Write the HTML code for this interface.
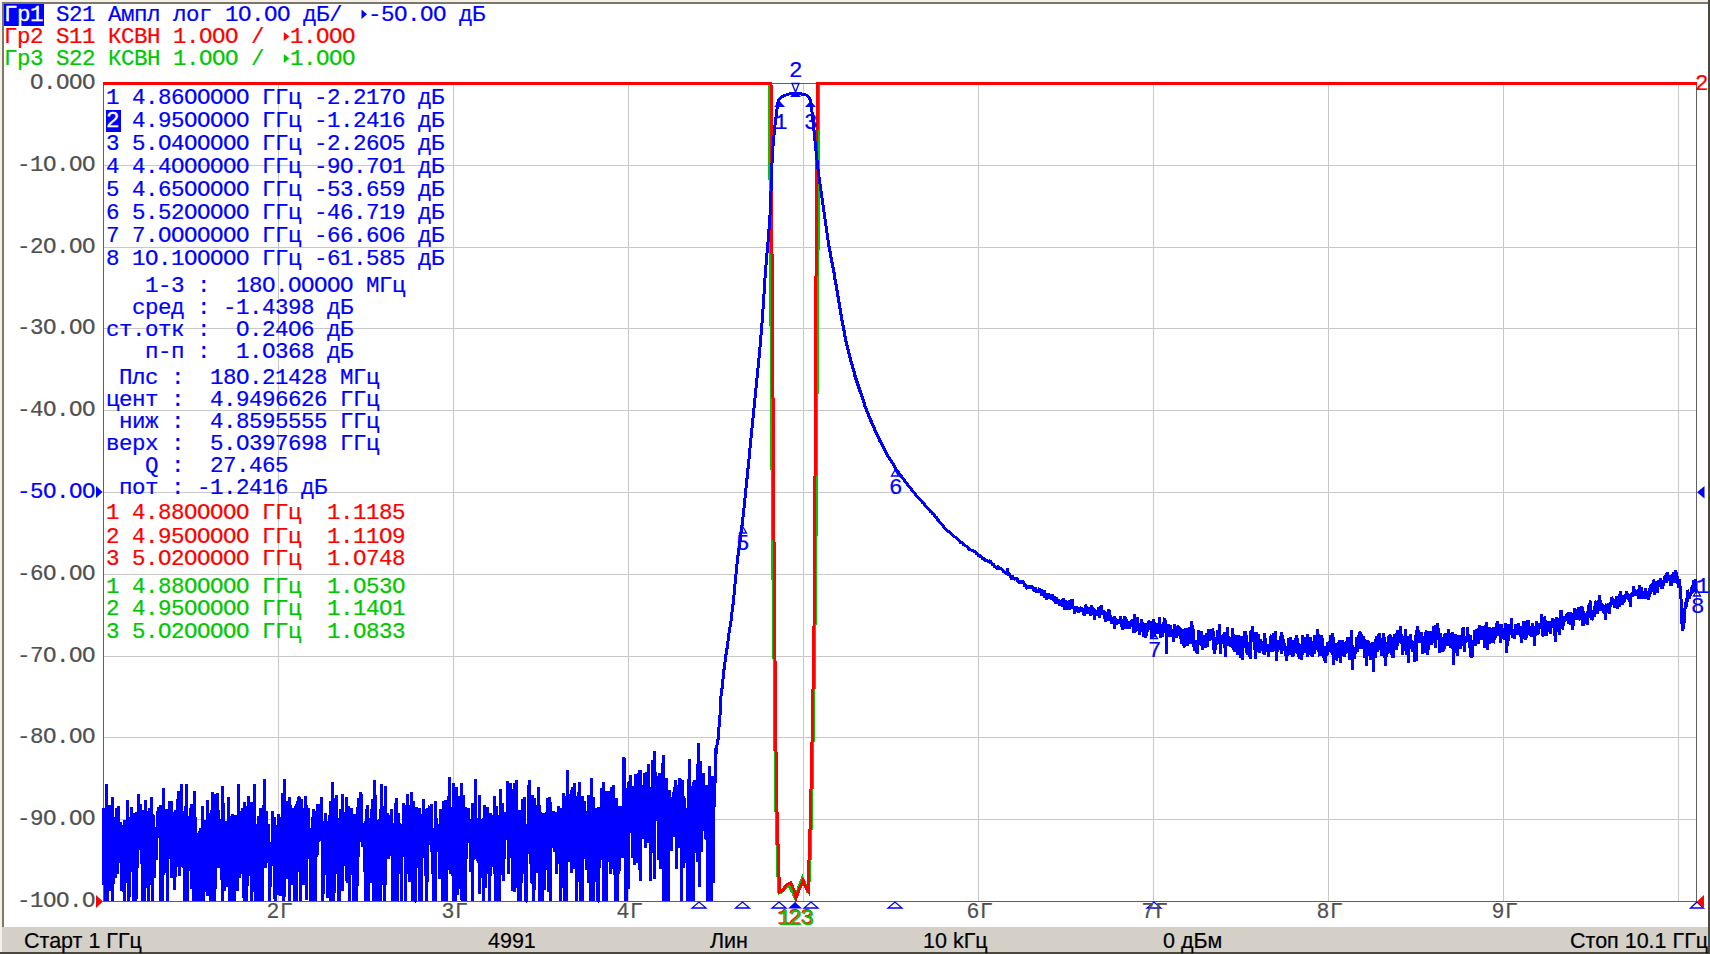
<!DOCTYPE html>
<html><head><meta charset="utf-8">
<style>
html,body{margin:0;padding:0;}
body{width:1710px;height:954px;position:relative;overflow:hidden;background:#fff;}
.m{position:absolute;font-family:"Liberation Mono",monospace;font-size:22.5px;letter-spacing:-0.5px;line-height:22px;white-space:pre;-webkit-text-stroke:0.22px currentColor;}
.hl{-webkit-text-stroke:0.3px #fff;}
.s{position:absolute;font-family:"Liberation Sans",sans-serif;font-size:21.5px;line-height:22px;white-space:pre;color:#000;-webkit-text-stroke:0.2px currentColor;}
.b{color:#0000ff}.r{color:#ff0000}.g{color:#00c800}.k{color:#505050}
.hl{display:inline-block;height:22px;background:#0000ff;color:#fff;}
svg{position:absolute;left:0;top:0;}
</style></head><body>
<svg width="1710" height="954" viewBox="0 0 1710 954">
 <g stroke="#c8c8c8" stroke-width="1" shape-rendering="crispEdges">
<line x1="278.5" y1="83.0" x2="278.5" y2="901.0"/>
<line x1="453.5" y1="83.0" x2="453.5" y2="901.0"/>
<line x1="628.5" y1="83.0" x2="628.5" y2="901.0"/>
<line x1="803.5" y1="83.0" x2="803.5" y2="901.0"/>
<line x1="978.5" y1="83.0" x2="978.5" y2="901.0"/>
<line x1="1153.5" y1="83.0" x2="1153.5" y2="901.0"/>
<line x1="1328.5" y1="83.0" x2="1328.5" y2="901.0"/>
<line x1="1503.5" y1="83.0" x2="1503.5" y2="901.0"/>
<line x1="1678.5" y1="83.0" x2="1678.5" y2="901.0"/>
<line x1="103.0" y1="165.5" x2="1697.0" y2="165.5"/>
<line x1="103.0" y1="247.5" x2="1697.0" y2="247.5"/>
<line x1="103.0" y1="328.5" x2="1697.0" y2="328.5"/>
<line x1="103.0" y1="410.5" x2="1697.0" y2="410.5"/>
<line x1="103.0" y1="492.5" x2="1697.0" y2="492.5"/>
<line x1="103.0" y1="574.5" x2="1697.0" y2="574.5"/>
<line x1="103.0" y1="656.5" x2="1697.0" y2="656.5"/>
<line x1="103.0" y1="737.5" x2="1697.0" y2="737.5"/>
<line x1="103.0" y1="819.5" x2="1697.0" y2="819.5"/>
 </g>
 <g stroke="#606060" stroke-width="1" fill="none" shape-rendering="crispEdges">
  <rect x="103.5" y="83.5" width="1593" height="818"/>
 </g>
 <defs><clipPath id="pc"><rect x="100" y="80" width="1597.5" height="824"/></clipPath></defs>
 <g fill="none" stroke-width="3" stroke-linejoin="bevel" clip-path="url(#pc)" shape-rendering="crispEdges">
  <polyline stroke="#00c800" stroke-linejoin="miter" points="103,83 769.5,83 770,180 772.5,540 774,659 775,751 776,812 777.5,860 778,877 779,893 782,892 785,888 789,886 793,893 795.5,899 798.5,888 802.5,878 805.5,885 808,893 809.5,877 810,860 811.4,818 812.4,771 813.7,709 815,627 816,540 818.5,180 819,83 1697,83"/>
  <polyline stroke="#ff0000" stroke-linejoin="miter" points="103,83 771,83 771.5,180 774,540 775,659 776,751 777,812 778.5,860 779,877 779.5,892 783.2,890 786,885 790.6,882.8 794,890 796,898 799,890 803,880.6 806,888 808.8,892 809,860 810.4,818 811.4,771 812.7,709 814,627 814.7,540 816.5,180 817.5,83 1697,83"/>
  <polyline stroke="#0000ff" points="103.50,884.5 103.50,807.6 103.50,865.5 103.50,844.5 104.50,838.1 104.50,861.0 104.50,882.6 105.50,821.2 105.50,827.6 105.50,901.0 106.50,784.4 106.50,814.2 106.50,861.6 107.50,901.0 107.50,851.6 107.50,837.6 108.50,818.1 108.50,878.7 108.50,822.8 109.50,804.7 109.50,806.4 109.50,845.9 110.50,815.6 110.50,891.3 110.50,841.0 111.50,825.6 111.50,881.7 111.50,838.4 112.50,797.5 112.50,901.0 112.50,901.0 113.50,817.3 113.50,868.5 113.50,877.1 113.50,884.1 114.50,823.6 114.50,819.0 114.50,858.2 115.50,877.8 115.50,829.9 115.50,828.6 116.50,840.1 116.50,807.5 116.50,838.8 117.50,837.8 117.50,873.6 117.50,832.6 118.50,805.8 118.50,834.2 118.50,834.0 119.50,826.0 119.50,829.4 119.50,823.8 120.50,823.7 120.50,821.9 120.50,862.9 121.50,828.9 121.50,890.6 121.50,829.7 122.50,878.9 122.50,838.0 122.50,825.1 123.50,849.8 123.50,833.4 123.50,891.9 123.50,865.0 124.50,820.4 124.50,901.0 124.50,821.2 125.50,883.3 125.50,866.7 125.50,873.2 126.50,835.4 126.50,823.8 126.50,872.2 127.50,841.8 127.50,799.7 127.50,846.5 128.50,863.6 128.50,901.0 128.50,843.2 129.50,859.7 129.50,897.3 129.50,817.5 130.50,855.2 130.50,835.5 130.50,872.1 131.50,806.8 131.50,819.0 131.50,813.9 132.50,839.4 132.50,825.2 132.50,815.9 133.50,813.0 133.50,828.7 133.50,901.0 133.50,847.9 134.50,861.3 134.50,868.7 134.50,901.0 135.50,844.0 135.50,901.0 135.50,840.9 136.50,812.1 136.50,845.0 136.50,899.2 137.50,839.8 137.50,818.2 137.50,831.1 138.50,850.3 138.50,794.7 138.50,793.6 139.50,838.9 139.50,817.6 139.50,826.9 140.50,818.3 140.50,803.5 140.50,817.4 141.50,833.6 141.50,858.0 141.50,863.5 142.50,836.4 142.50,810.0 142.50,901.0 143.50,834.4 143.50,829.9 143.50,901.0 143.50,823.5 144.50,874.1 144.50,901.0 144.50,850.2 145.50,875.0 145.50,799.9 145.50,841.0 146.50,844.2 146.50,888.4 146.50,829.3 147.50,857.0 147.50,810.8 147.50,817.0 148.50,862.2 148.50,826.5 148.50,901.0 149.50,858.7 149.50,808.0 149.50,818.1 150.50,831.7 150.50,836.6 150.50,884.3 151.50,882.3 151.50,830.6 151.50,796.6 152.50,901.0 152.50,821.7 152.50,822.3 153.50,814.6 153.50,865.4 153.50,853.7 153.50,834.6 154.50,870.9 154.50,877.8 154.50,865.9 155.50,838.0 155.50,827.3 155.50,836.4 156.50,833.9 156.50,859.1 156.50,860.3 157.50,810.8 157.50,837.4 157.50,838.4 158.50,814.9 158.50,808.2 158.50,807.4 159.50,826.6 159.50,837.3 159.50,829.2 160.50,831.6 160.50,804.7 160.50,901.0 161.50,821.5 161.50,836.5 161.50,805.3 162.50,901.0 162.50,827.2 162.50,818.9 163.50,875.4 163.50,788.1 163.50,840.7 163.50,841.1 164.50,872.6 164.50,816.2 164.50,830.6 165.50,855.9 165.50,830.6 165.50,820.4 166.50,808.7 166.50,830.8 166.50,868.7 167.50,854.7 167.50,901.0 167.50,901.0 168.50,819.3 168.50,825.3 168.50,839.3 169.50,847.3 169.50,800.6 169.50,829.3 170.50,815.5 170.50,826.8 170.50,858.6 171.50,801.2 171.50,878.1 171.50,876.7 172.50,850.3 172.50,860.6 172.50,854.7 173.50,856.2 173.50,813.8 173.50,834.4 173.50,827.8 174.50,890.1 174.50,864.7 174.50,811.6 175.50,876.9 175.50,809.5 175.50,871.0 176.50,829.0 176.50,864.6 176.50,831.2 177.50,866.5 177.50,844.4 177.50,798.6 178.50,848.5 178.50,790.6 178.50,851.3 179.50,876.0 179.50,833.9 179.50,849.6 180.50,796.8 180.50,816.5 180.50,809.5 181.50,821.6 181.50,783.6 181.50,818.0 182.50,823.8 182.50,864.1 182.50,866.8 183.50,831.5 183.50,813.5 183.50,810.9 183.50,868.0 184.50,823.8 184.50,831.3 184.50,901.0 185.50,824.3 185.50,901.0 185.50,829.7 186.50,783.6 186.50,870.6 186.50,835.1 187.50,900.6 187.50,861.5 187.50,818.9 188.50,871.4 188.50,836.7 188.50,847.8 189.50,848.6 189.50,831.3 189.50,824.9 190.50,808.4 190.50,817.2 190.50,855.0 191.50,804.3 191.50,808.0 191.50,889.1 192.50,820.9 192.50,817.3 192.50,814.2 193.50,823.5 193.50,880.1 193.50,844.8 193.50,901.0 194.50,841.0 194.50,790.7 194.50,820.5 195.50,817.1 195.50,853.2 195.50,870.5 196.50,901.0 196.50,832.8 196.50,863.1 197.50,901.0 197.50,901.0 197.50,891.9 198.50,880.7 198.50,853.1 198.50,839.0 199.50,840.0 199.50,883.5 199.50,831.3 200.50,901.0 200.50,827.7 200.50,872.8 201.50,830.2 201.50,830.7 201.50,858.2 202.50,843.1 202.50,854.7 202.50,805.6 203.50,901.0 203.50,885.3 203.50,894.2 203.50,848.6 204.50,858.9 204.50,849.7 204.50,819.7 205.50,891.6 205.50,864.6 205.50,843.2 206.50,876.9 206.50,827.4 206.50,828.3 207.50,860.0 207.50,896.4 207.50,800.2 208.50,825.2 208.50,826.2 208.50,834.0 209.50,835.8 209.50,817.2 209.50,836.1 210.50,857.2 210.50,901.0 210.50,834.2 211.50,862.1 211.50,866.7 211.50,809.8 212.50,821.6 212.50,791.9 212.50,853.7 213.50,861.1 213.50,901.0 213.50,805.1 213.50,822.4 214.50,826.0 214.50,793.9 214.50,901.0 215.50,878.4 215.50,861.1 215.50,846.4 216.50,827.3 216.50,813.0 216.50,826.6 217.50,801.9 217.50,864.0 217.50,793.5 218.50,863.5 218.50,809.7 218.50,867.8 219.50,828.0 219.50,834.4 219.50,824.1 220.50,819.0 220.50,842.9 220.50,837.9 221.50,830.3 221.50,880.4 221.50,860.7 222.50,891.4 222.50,901.0 222.50,786.5 223.50,819.2 223.50,865.3 223.50,859.9 223.50,814.0 224.50,851.9 224.50,890.8 224.50,870.7 225.50,871.8 225.50,870.7 225.50,820.6 226.50,834.0 226.50,886.7 226.50,854.1 227.50,874.7 227.50,877.1 227.50,887.3 228.50,797.0 228.50,846.1 228.50,822.8 229.50,816.4 229.50,901.0 229.50,823.7 230.50,823.6 230.50,830.6 230.50,901.0 231.50,829.3 231.50,843.4 231.50,821.3 232.50,901.0 232.50,813.6 232.50,852.0 233.50,865.1 233.50,867.5 233.50,858.3 233.50,827.0 234.50,816.9 234.50,901.0 234.50,836.2 235.50,873.5 235.50,820.5 235.50,815.4 236.50,862.3 236.50,851.0 236.50,868.3 237.50,826.9 237.50,890.9 237.50,874.2 238.50,859.1 238.50,808.5 238.50,784.1 239.50,835.1 239.50,877.9 239.50,833.9 240.50,865.4 240.50,825.4 240.50,873.8 241.50,848.3 241.50,836.0 241.50,824.1 242.50,838.2 242.50,807.6 242.50,832.8 243.50,897.9 243.50,815.2 243.50,845.6 243.50,858.6 244.50,802.3 244.50,901.0 244.50,834.0 245.50,860.1 245.50,805.7 245.50,848.1 246.50,830.4 246.50,883.4 246.50,901.0 247.50,872.3 247.50,815.5 247.50,811.0 248.50,808.3 248.50,795.5 248.50,875.8 249.50,826.7 249.50,832.5 249.50,826.3 250.50,811.3 250.50,833.1 250.50,863.6 251.50,838.9 251.50,801.6 251.50,901.0 252.50,833.8 252.50,869.3 252.50,811.1 253.50,892.2 253.50,847.3 253.50,839.8 253.50,833.0 254.50,784.4 254.50,801.2 254.50,870.9 255.50,901.0 255.50,876.5 255.50,899.8 256.50,887.0 256.50,831.1 256.50,823.7 257.50,901.0 257.50,825.9 257.50,844.7 258.50,820.0 258.50,848.8 258.50,815.7 259.50,823.1 259.50,875.8 259.50,901.0 260.50,830.9 260.50,819.4 260.50,807.7 261.50,901.0 261.50,838.5 261.50,863.8 262.50,867.9 262.50,829.7 262.50,901.0 263.50,806.2 263.50,805.0 263.50,836.3 263.50,864.3 264.50,778.8 264.50,788.1 264.50,839.2 265.50,867.5 265.50,850.1 265.50,829.4 266.50,810.6 266.50,814.2 266.50,825.9 267.50,844.1 267.50,831.8 267.50,846.2 268.50,834.0 268.50,839.1 268.50,824.0 269.50,900.2 269.50,847.4 269.50,901.0 270.50,874.4 270.50,841.5 270.50,871.8 271.50,858.4 271.50,845.5 271.50,844.3 272.50,855.3 272.50,811.2 272.50,831.1 273.50,828.4 273.50,830.4 273.50,858.5 273.50,865.9 274.50,817.0 274.50,847.7 274.50,896.4 275.50,901.0 275.50,830.7 275.50,860.9 276.50,837.9 276.50,854.4 276.50,849.6 277.50,841.5 277.50,878.4 277.50,836.2 278.50,813.8 278.50,820.2 278.50,895.3 279.50,881.7 279.50,881.4 279.50,844.1 280.50,816.7 280.50,828.4 280.50,895.8 281.50,834.3 281.50,817.7 281.50,851.0 282.50,793.5 282.50,857.9 282.50,809.7 283.50,901.0 283.50,879.4 283.50,846.7 283.50,822.9 284.50,778.7 284.50,897.0 284.50,823.1 285.50,829.3 285.50,850.1 285.50,864.2 286.50,853.6 286.50,846.0 286.50,879.2 287.50,800.8 287.50,873.6 287.50,850.2 288.50,858.3 288.50,849.8 288.50,833.5 289.50,861.6 289.50,901.0 289.50,797.5 290.50,812.2 290.50,845.5 290.50,815.5 291.50,862.0 291.50,830.6 291.50,884.6 292.50,874.9 292.50,865.3 292.50,808.2 293.50,830.5 293.50,823.5 293.50,832.2 293.50,827.5 294.50,901.0 294.50,818.7 294.50,832.0 295.50,867.0 295.50,862.7 295.50,808.7 296.50,804.4 296.50,901.0 296.50,892.1 297.50,800.8 297.50,828.4 297.50,838.1 298.50,835.1 298.50,848.4 298.50,796.7 299.50,798.4 299.50,872.1 299.50,842.1 300.50,901.0 300.50,807.4 300.50,901.0 301.50,815.0 301.50,798.7 301.50,847.0 302.50,837.3 302.50,808.1 302.50,827.5 303.50,881.8 303.50,876.2 303.50,871.5 303.50,884.8 304.50,836.3 304.50,853.9 304.50,835.0 305.50,820.3 305.50,796.4 305.50,831.1 306.50,900.2 306.50,805.1 306.50,840.2 307.50,810.1 307.50,851.6 307.50,829.2 308.50,840.8 308.50,837.0 308.50,807.7 309.50,858.7 309.50,832.3 309.50,831.1 310.50,849.5 310.50,901.0 310.50,828.2 311.50,901.0 311.50,887.9 311.50,852.0 312.50,901.0 312.50,816.9 312.50,817.6 313.50,822.7 313.50,848.7 313.50,809.0 313.50,845.3 314.50,811.1 314.50,901.0 314.50,868.9 315.50,855.9 315.50,836.2 315.50,901.0 316.50,817.9 316.50,814.0 316.50,818.5 317.50,853.9 317.50,803.7 317.50,854.9 318.50,815.8 318.50,838.1 318.50,836.7 319.50,841.4 319.50,836.8 319.50,811.3 320.50,804.1 320.50,804.3 320.50,815.8 321.50,821.1 321.50,825.9 321.50,797.0 322.50,851.3 322.50,901.0 322.50,834.8 323.50,893.5 323.50,844.2 323.50,838.1 323.50,871.4 324.50,855.9 324.50,820.5 324.50,844.0 325.50,834.2 325.50,813.0 325.50,857.2 326.50,875.4 326.50,837.5 326.50,826.5 327.50,898.4 327.50,821.4 327.50,846.9 328.50,850.3 328.50,865.7 328.50,842.4 329.50,814.6 329.50,824.2 329.50,817.9 330.50,848.6 330.50,800.6 330.50,901.0 331.50,836.6 331.50,901.0 331.50,834.4 332.50,781.8 332.50,837.8 332.50,871.0 333.50,798.0 333.50,857.0 333.50,824.8 333.50,901.0 334.50,886.4 334.50,832.9 334.50,809.3 335.50,847.0 335.50,821.2 335.50,836.5 336.50,812.9 336.50,794.7 336.50,873.5 337.50,845.5 337.50,826.9 337.50,857.4 338.50,864.1 338.50,847.6 338.50,901.0 339.50,858.2 339.50,901.0 339.50,817.7 340.50,819.1 340.50,820.6 340.50,809.2 341.50,882.5 341.50,839.6 341.50,831.4 342.50,823.9 342.50,891.1 342.50,794.0 343.50,866.2 343.50,829.7 343.50,819.3 343.50,811.6 344.50,859.1 344.50,854.2 344.50,827.4 345.50,822.6 345.50,815.4 345.50,837.5 346.50,859.4 346.50,881.4 346.50,797.0 347.50,882.7 347.50,820.1 347.50,829.4 348.50,818.7 348.50,814.4 348.50,805.7 349.50,837.5 349.50,826.7 349.50,901.0 350.50,834.5 350.50,866.6 350.50,840.7 351.50,808.1 351.50,833.1 351.50,811.4 352.50,842.3 352.50,826.6 352.50,849.6 353.50,901.0 353.50,859.9 353.50,844.5 353.50,832.0 354.50,835.4 354.50,839.7 354.50,814.5 355.50,821.6 355.50,849.0 355.50,816.2 356.50,901.0 356.50,845.0 356.50,840.4 357.50,806.6 357.50,853.7 357.50,885.9 358.50,831.5 358.50,798.0 358.50,842.4 359.50,838.6 359.50,842.2 359.50,834.2 360.50,806.5 360.50,791.9 360.50,824.9 361.50,838.7 361.50,794.3 361.50,833.1 362.50,833.8 362.50,847.4 362.50,845.9 363.50,829.9 363.50,844.9 363.50,826.0 363.50,833.2 364.50,822.9 364.50,848.1 364.50,841.9 365.50,901.0 365.50,833.7 365.50,833.0 366.50,809.4 366.50,871.8 366.50,901.0 367.50,819.2 367.50,901.0 367.50,805.4 368.50,837.9 368.50,875.2 368.50,901.0 369.50,826.4 369.50,850.6 369.50,860.8 370.50,822.8 370.50,858.3 370.50,826.6 371.50,809.5 371.50,882.8 371.50,847.3 372.50,824.7 372.50,798.6 372.50,814.7 373.50,850.7 373.50,803.0 373.50,901.0 373.50,840.7 374.50,826.9 374.50,872.8 374.50,779.6 375.50,808.9 375.50,901.0 375.50,854.7 376.50,875.0 376.50,827.1 376.50,820.0 377.50,848.9 377.50,841.9 377.50,823.1 378.50,837.3 378.50,899.0 378.50,901.0 379.50,830.0 379.50,819.3 379.50,861.2 380.50,901.0 380.50,878.2 380.50,828.8 381.50,789.5 381.50,784.4 381.50,828.7 382.50,885.4 382.50,846.9 382.50,825.6 383.50,825.8 383.50,833.3 383.50,805.9 383.50,866.3 384.50,901.0 384.50,865.5 384.50,875.3 385.50,786.1 385.50,841.8 385.50,884.5 386.50,821.8 386.50,813.2 386.50,834.3 387.50,831.2 387.50,812.8 387.50,824.1 388.50,859.4 388.50,822.4 388.50,814.9 389.50,827.9 389.50,816.2 389.50,822.6 390.50,843.5 390.50,840.5 390.50,821.9 391.50,854.5 391.50,810.0 391.50,808.6 392.50,901.0 392.50,837.9 392.50,861.3 393.50,857.3 393.50,832.3 393.50,841.3 393.50,823.0 394.50,828.4 394.50,827.3 394.50,862.4 395.50,847.5 395.50,803.3 395.50,901.0 396.50,797.6 396.50,854.8 396.50,809.5 397.50,901.0 397.50,849.9 397.50,816.8 398.50,832.2 398.50,813.1 398.50,865.6 399.50,854.7 399.50,858.0 399.50,824.3 400.50,825.3 400.50,839.7 400.50,844.6 401.50,901.0 401.50,833.6 401.50,868.1 402.50,837.5 402.50,840.5 402.50,854.1 403.50,855.1 403.50,802.9 403.50,856.6 403.50,826.4 404.50,805.3 404.50,819.2 404.50,835.1 405.50,813.1 405.50,884.5 405.50,901.0 406.50,849.1 406.50,843.1 406.50,838.8 407.50,794.0 407.50,798.3 407.50,836.8 408.50,829.9 408.50,866.7 408.50,828.5 409.50,881.6 409.50,804.6 409.50,853.4 410.50,823.2 410.50,880.4 410.50,804.8 411.50,822.0 411.50,792.3 411.50,834.0 412.50,891.2 412.50,862.5 412.50,901.0 413.50,800.7 413.50,857.0 413.50,861.4 413.50,901.0 414.50,829.7 414.50,824.7 414.50,901.0 415.50,901.0 415.50,882.2 415.50,901.0 416.50,807.3 416.50,815.4 416.50,848.4 417.50,821.8 417.50,820.7 417.50,821.5 418.50,823.8 418.50,816.0 418.50,833.7 419.50,901.0 419.50,901.0 419.50,807.6 420.50,822.3 420.50,901.0 420.50,831.7 421.50,865.7 421.50,854.4 421.50,901.0 422.50,818.5 422.50,838.4 422.50,817.5 423.50,811.5 423.50,807.0 423.50,799.1 423.50,829.1 424.50,830.7 424.50,857.5 424.50,823.8 425.50,843.7 425.50,876.0 425.50,808.9 426.50,819.7 426.50,901.0 426.50,899.6 427.50,843.0 427.50,881.7 427.50,808.3 428.50,831.4 428.50,822.7 428.50,814.6 429.50,805.6 429.50,844.7 429.50,821.4 430.50,829.6 430.50,817.5 430.50,822.9 431.50,803.6 431.50,823.3 431.50,851.6 432.50,832.5 432.50,874.2 432.50,828.1 433.50,901.0 433.50,855.9 433.50,892.1 433.50,837.7 434.50,852.4 434.50,835.2 434.50,855.4 435.50,833.4 435.50,901.0 435.50,800.6 436.50,842.8 436.50,823.7 436.50,818.3 437.50,840.2 437.50,825.1 437.50,843.5 438.50,850.4 438.50,842.6 438.50,824.3 439.50,878.7 439.50,866.2 439.50,862.7 440.50,854.5 440.50,809.4 440.50,836.0 441.50,845.4 441.50,831.9 441.50,811.6 442.50,860.7 442.50,812.4 442.50,901.0 443.50,865.4 443.50,802.3 443.50,800.5 443.50,830.6 444.50,849.2 444.50,816.6 444.50,848.6 445.50,800.5 445.50,901.0 445.50,817.7 446.50,863.4 446.50,813.1 446.50,901.0 447.50,842.2 447.50,848.6 447.50,838.1 448.50,823.4 448.50,815.7 448.50,815.7 449.50,777.1 449.50,845.5 449.50,808.6 450.50,856.4 450.50,840.2 450.50,873.6 451.50,807.3 451.50,828.4 451.50,831.2 452.50,837.3 452.50,813.6 452.50,850.4 453.50,901.0 453.50,782.8 453.50,838.0 453.50,854.6 454.50,867.9 454.50,815.8 454.50,832.3 455.50,901.0 455.50,861.6 455.50,833.1 456.50,867.4 456.50,787.2 456.50,839.4 457.50,839.0 457.50,836.0 457.50,895.3 458.50,882.8 458.50,845.3 458.50,834.3 459.50,875.5 459.50,796.1 459.50,823.6 460.50,805.1 460.50,807.7 460.50,840.5 461.50,783.2 461.50,831.0 461.50,897.8 462.50,901.0 462.50,833.7 462.50,814.4 463.50,832.1 463.50,795.2 463.50,843.0 463.50,821.2 464.50,817.4 464.50,868.2 464.50,826.9 465.50,825.6 465.50,901.0 465.50,806.9 466.50,811.9 466.50,858.9 466.50,817.5 467.50,810.0 467.50,833.0 467.50,817.1 468.50,816.7 468.50,807.6 468.50,832.1 469.50,823.3 469.50,829.5 469.50,832.4 470.50,854.1 470.50,844.5 470.50,871.6 471.50,839.8 471.50,818.7 471.50,820.3 472.50,901.0 472.50,836.9 472.50,803.2 473.50,848.8 473.50,817.1 473.50,824.8 473.50,858.8 474.50,857.4 474.50,817.5 474.50,833.2 475.50,828.0 475.50,779.2 475.50,821.5 476.50,831.3 476.50,817.7 476.50,853.7 477.50,839.1 477.50,824.1 477.50,861.1 478.50,834.6 478.50,839.3 478.50,831.5 479.50,893.6 479.50,794.8 479.50,835.9 480.50,821.8 480.50,868.5 480.50,877.8 481.50,833.3 481.50,844.0 481.50,819.5 482.50,864.6 482.50,866.7 482.50,826.5 483.50,818.4 483.50,901.0 483.50,834.5 483.50,828.1 484.50,860.2 484.50,804.8 484.50,808.7 485.50,809.4 485.50,888.0 485.50,814.5 486.50,858.0 486.50,823.0 486.50,824.4 487.50,807.0 487.50,839.6 487.50,844.8 488.50,867.7 488.50,873.8 488.50,821.2 489.50,864.3 489.50,819.3 489.50,901.0 490.50,852.8 490.50,813.0 490.50,815.2 491.50,867.3 491.50,839.2 491.50,834.4 492.50,819.5 492.50,858.7 492.50,847.8 493.50,837.5 493.50,819.0 493.50,814.6 493.50,852.1 494.50,795.6 494.50,825.0 494.50,860.9 495.50,886.8 495.50,850.8 495.50,901.0 496.50,830.3 496.50,822.1 496.50,806.4 497.50,823.4 497.50,892.4 497.50,843.5 498.50,819.1 498.50,901.0 498.50,862.0 499.50,820.7 499.50,833.3 499.50,901.0 500.50,851.2 500.50,834.0 500.50,788.7 501.50,848.9 501.50,865.0 501.50,829.1 502.50,827.1 502.50,821.9 502.50,802.7 503.50,836.1 503.50,880.9 503.50,833.5 503.50,834.0 504.50,813.1 504.50,815.9 504.50,859.0 505.50,817.4 505.50,812.3 505.50,840.2 506.50,813.5 506.50,830.7 506.50,830.4 507.50,838.7 507.50,816.6 507.50,780.6 508.50,829.3 508.50,873.5 508.50,841.6 509.50,853.6 509.50,827.2 509.50,838.4 510.50,782.9 510.50,817.9 510.50,793.3 511.50,857.9 511.50,840.9 511.50,789.0 512.50,891.2 512.50,831.2 512.50,886.8 513.50,800.4 513.50,882.2 513.50,844.1 513.50,839.8 514.50,891.6 514.50,783.3 514.50,839.5 515.50,798.1 515.50,857.6 515.50,884.1 516.50,829.7 516.50,830.3 516.50,780.3 517.50,870.1 517.50,887.5 517.50,858.2 518.50,827.8 518.50,822.1 518.50,901.0 519.50,846.0 519.50,822.5 519.50,810.5 520.50,854.5 520.50,831.7 520.50,901.0 521.50,867.4 521.50,825.2 521.50,835.0 522.50,840.6 522.50,799.1 522.50,844.1 523.50,871.8 523.50,830.1 523.50,830.1 523.50,873.6 524.50,812.6 524.50,797.1 524.50,854.5 525.50,864.2 525.50,837.1 525.50,901.0 526.50,901.0 526.50,859.3 526.50,854.5 527.50,829.4 527.50,830.0 527.50,840.1 528.50,808.1 528.50,785.0 528.50,854.1 529.50,811.7 529.50,828.7 529.50,779.8 530.50,864.4 530.50,846.0 530.50,832.3 531.50,883.2 531.50,841.4 531.50,818.9 532.50,883.9 532.50,831.8 532.50,795.2 533.50,854.7 533.50,865.1 533.50,901.0 533.50,837.9 534.50,890.2 534.50,822.4 534.50,798.3 535.50,822.4 535.50,861.5 535.50,820.2 536.50,850.4 536.50,873.1 536.50,851.4 537.50,829.4 537.50,846.8 537.50,823.1 538.50,787.3 538.50,821.2 538.50,818.0 539.50,901.0 539.50,805.3 539.50,827.0 540.50,812.4 540.50,861.1 540.50,829.6 541.50,901.0 541.50,846.7 541.50,863.5 542.50,869.1 542.50,901.0 542.50,887.3 543.50,839.7 543.50,839.5 543.50,823.2 543.50,812.6 544.50,889.8 544.50,853.3 544.50,858.9 545.50,819.6 545.50,814.3 545.50,848.9 546.50,853.5 546.50,869.7 546.50,827.0 547.50,798.3 547.50,826.8 547.50,859.1 548.50,863.6 548.50,859.5 548.50,891.7 549.50,796.9 549.50,833.6 549.50,846.4 550.50,901.0 550.50,830.4 550.50,802.5 551.50,829.3 551.50,810.9 551.50,833.7 552.50,847.8 552.50,826.2 552.50,819.5 553.50,811.2 553.50,830.9 553.50,843.7 553.50,847.9 554.50,828.5 554.50,851.9 554.50,846.4 555.50,812.7 555.50,811.7 555.50,813.5 556.50,850.2 556.50,874.1 556.50,818.6 557.50,822.2 557.50,837.6 557.50,820.1 558.50,805.9 558.50,831.5 558.50,815.9 559.50,858.2 559.50,832.1 559.50,853.2 560.50,874.3 560.50,815.1 560.50,901.0 561.50,826.8 561.50,807.6 561.50,815.9 562.50,877.9 562.50,819.5 562.50,887.6 563.50,855.2 563.50,793.2 563.50,821.3 563.50,798.8 564.50,901.0 564.50,896.2 564.50,850.6 565.50,796.5 565.50,804.5 565.50,801.2 566.50,829.8 566.50,827.9 566.50,901.0 567.50,770.1 567.50,822.9 567.50,785.8 568.50,830.8 568.50,794.3 568.50,861.9 569.50,841.9 569.50,816.8 569.50,844.2 570.50,838.6 570.50,830.0 570.50,843.1 571.50,790.3 571.50,799.6 571.50,872.5 572.50,786.7 572.50,825.7 572.50,825.4 573.50,830.0 573.50,805.2 573.50,808.8 573.50,842.3 574.50,823.3 574.50,869.2 574.50,783.4 575.50,853.5 575.50,854.7 575.50,848.8 576.50,821.3 576.50,807.8 576.50,901.0 577.50,823.8 577.50,835.7 577.50,795.8 578.50,819.2 578.50,882.3 578.50,791.6 579.50,816.8 579.50,781.6 579.50,844.9 580.50,840.9 580.50,829.9 580.50,901.0 581.50,836.5 581.50,796.4 581.50,808.7 582.50,901.0 582.50,795.7 582.50,816.2 583.50,806.0 583.50,823.2 583.50,819.9 583.50,822.9 584.50,823.0 584.50,859.3 584.50,801.1 585.50,819.3 585.50,815.6 585.50,816.5 586.50,834.2 586.50,825.7 586.50,869.7 587.50,818.3 587.50,818.0 587.50,832.0 588.50,882.8 588.50,794.6 588.50,829.6 589.50,824.6 589.50,834.4 589.50,844.2 590.50,901.0 590.50,861.9 590.50,843.8 591.50,778.5 591.50,798.0 591.50,779.9 592.50,845.0 592.50,888.7 592.50,870.5 593.50,901.0 593.50,800.1 593.50,797.0 593.50,821.7 594.50,815.8 594.50,816.0 594.50,827.6 595.50,808.0 595.50,858.5 595.50,838.8 596.50,828.7 596.50,882.2 596.50,858.3 597.50,814.5 597.50,816.5 597.50,901.0 598.50,901.0 598.50,901.0 598.50,807.1 599.50,825.9 599.50,811.1 599.50,868.2 600.50,831.1 600.50,860.3 600.50,841.5 601.50,798.2 601.50,788.1 601.50,823.4 602.50,838.9 602.50,806.9 602.50,814.0 603.50,781.7 603.50,810.2 603.50,901.0 603.50,822.8 604.50,834.8 604.50,901.0 604.50,821.1 605.50,822.8 605.50,835.8 605.50,790.9 606.50,901.0 606.50,815.2 606.50,820.6 607.50,797.2 607.50,861.9 607.50,797.4 608.50,831.8 608.50,791.3 608.50,792.7 609.50,813.1 609.50,839.2 609.50,817.9 610.50,816.3 610.50,873.8 610.50,834.8 611.50,847.6 611.50,793.8 611.50,786.6 612.50,848.6 612.50,841.7 612.50,868.9 613.50,818.3 613.50,806.2 613.50,784.6 613.50,867.7 614.50,803.6 614.50,828.8 614.50,848.4 615.50,901.0 615.50,849.9 615.50,814.3 616.50,824.2 616.50,798.1 616.50,841.9 617.50,887.9 617.50,901.0 617.50,816.7 618.50,874.4 618.50,849.6 618.50,812.5 619.50,870.9 619.50,805.7 619.50,816.8 620.50,844.0 620.50,825.5 620.50,841.1 621.50,837.6 621.50,835.2 621.50,824.0 622.50,827.1 622.50,849.6 622.50,857.6 623.50,756.7 623.50,842.3 623.50,807.5 623.50,775.9 624.50,780.5 624.50,828.6 624.50,758.2 625.50,901.0 625.50,813.5 625.50,847.3 626.50,788.4 626.50,808.6 626.50,901.0 627.50,831.6 627.50,823.9 627.50,798.7 628.50,782.5 628.50,877.9 628.50,889.2 629.50,781.1 629.50,833.0 629.50,787.1 630.50,799.9 630.50,774.9 630.50,782.3 631.50,812.1 631.50,807.9 631.50,795.3 632.50,785.9 632.50,825.0 632.50,857.7 633.50,800.1 633.50,803.6 633.50,807.7 633.50,838.6 634.50,789.0 634.50,865.3 634.50,819.7 635.50,773.8 635.50,842.7 635.50,793.1 636.50,792.3 636.50,792.9 636.50,863.4 637.50,780.0 637.50,799.1 637.50,791.4 638.50,795.5 638.50,800.9 638.50,775.3 639.50,770.5 639.50,870.1 639.50,830.3 640.50,807.9 640.50,881.4 640.50,769.9 641.50,830.2 641.50,789.8 641.50,797.4 642.50,809.6 642.50,838.7 642.50,814.9 643.50,800.1 643.50,784.8 643.50,809.1 643.50,816.1 644.50,810.7 644.50,773.4 644.50,795.7 645.50,826.3 645.50,847.8 645.50,816.6 646.50,835.0 646.50,817.0 646.50,772.2 647.50,786.8 647.50,797.0 647.50,793.2 648.50,764.1 648.50,843.3 648.50,792.3 649.50,809.1 649.50,799.0 649.50,800.5 650.50,813.2 650.50,790.1 650.50,880.9 651.50,795.7 651.50,787.1 651.50,836.6 652.50,837.4 652.50,760.1 652.50,834.4 653.50,815.4 653.50,829.9 653.50,824.0 653.50,826.1 654.50,878.9 654.50,751.3 654.50,828.2 655.50,793.7 655.50,804.5 655.50,772.5 656.50,786.9 656.50,777.3 656.50,776.5 657.50,783.7 657.50,801.4 657.50,782.1 658.50,860.0 658.50,782.6 658.50,786.8 659.50,795.5 659.50,850.4 659.50,772.9 660.50,826.4 660.50,788.4 660.50,869.4 661.50,808.3 661.50,825.4 661.50,830.2 662.50,826.1 662.50,763.2 662.50,803.0 663.50,794.7 663.50,755.3 663.50,854.2 663.50,901.0 664.50,815.4 664.50,824.8 664.50,816.8 665.50,901.0 665.50,857.9 665.50,843.4 666.50,822.4 666.50,786.6 666.50,778.4 667.50,815.4 667.50,794.1 667.50,792.7 668.50,901.0 668.50,797.3 668.50,901.0 669.50,790.1 669.50,810.2 669.50,801.5 670.50,796.7 670.50,799.1 670.50,828.2 671.50,851.4 671.50,804.5 671.50,822.8 672.50,821.5 672.50,805.9 672.50,828.1 673.50,792.5 673.50,793.6 673.50,835.0 673.50,794.3 674.50,837.3 674.50,786.5 674.50,788.8 675.50,802.7 675.50,782.9 675.50,780.0 676.50,792.7 676.50,869.4 676.50,799.6 677.50,798.1 677.50,784.8 677.50,838.3 678.50,787.0 678.50,794.8 678.50,793.6 679.50,847.7 679.50,834.0 679.50,777.7 680.50,784.4 680.50,805.5 680.50,778.7 681.50,901.0 681.50,817.7 681.50,901.0 682.50,780.4 682.50,807.7 682.50,797.5 683.50,868.3 683.50,822.4 683.50,796.2 683.50,811.7 684.50,829.6 684.50,843.3 684.50,798.2 685.50,816.2 685.50,815.1 685.50,813.4 686.50,826.5 686.50,814.9 686.50,825.3 687.50,901.0 687.50,853.0 687.50,843.0 688.50,802.3 688.50,809.0 688.50,799.5 689.50,758.9 689.50,786.6 689.50,778.2 690.50,793.8 690.50,807.3 690.50,901.0 691.50,870.8 691.50,854.6 691.50,888.3 692.50,843.9 692.50,861.0 692.50,838.3 693.50,901.0 693.50,817.9 693.50,783.6 693.50,783.2 694.50,780.6 694.50,784.1 694.50,797.1 695.50,821.7 695.50,793.0 695.50,812.1 696.50,810.3 696.50,794.0 696.50,842.8 697.50,862.3 697.50,795.8 697.50,764.0 698.50,778.4 698.50,742.6 698.50,854.1 699.50,826.5 699.50,886.8 699.50,834.3 700.50,761.5 700.50,767.6 700.50,840.0 701.50,814.7 701.50,832.9 701.50,852.0 702.50,811.8 702.50,814.9 702.50,800.8 703.50,797.1 703.50,787.6 703.50,772.8 703.50,805.8 704.50,810.5 704.50,802.7 704.50,793.1 705.50,807.7 705.50,838.9 705.50,821.8 706.50,786.7 706.50,840.4 706.50,785.1 707.50,853.7 707.50,789.5 707.50,901.0 708.50,810.6 708.50,901.0 708.50,811.3 709.50,766.1 709.50,818.8 709.50,829.5 710.50,794.6 710.50,778.6 710.50,795.5 711.50,808.2 711.50,780.5 711.50,901.0 712.50,831.3 712.50,847.9 712.50,776.4 713.50,883.4 713.50,849.8 713.50,797.5 713.50,793.9 714.00,807.3 714.32,800.1 714.65,786.4 714.97,788.0 715.29,751.1 715.61,748.6 715.94,754.9 716.26,750.7 716.58,746.7 716.90,747.7 717.23,739.4 717.55,739.9 717.87,742.3 718.19,736.9 718.52,734.4 718.84,729.7 719.16,724.9 719.48,717.1 719.81,715.8 720.13,714.5 720.45,701.3 720.77,702.4 721.10,693.3 721.42,692.6 721.74,688.6 722.06,688.6 722.39,683.8 722.71,681.9 723.03,678.6 723.35,674.9 723.68,673.9 724.00,669.2 724.32,670.3 724.65,667.2 724.97,662.3 725.29,659.9 725.61,657.1 725.94,654.3 726.26,653.7 726.58,651.1 726.90,649.4 727.23,647.1 727.55,644.9 727.87,642.1 728.19,640.3 728.52,637.4 728.84,634.1 729.16,632.2 729.48,629.4 729.81,628.8 730.13,626.5 730.45,623.6 730.77,622.4 731.10,620.0 731.42,616.3 731.74,614.5 732.06,611.1 732.39,609.0 732.71,606.7 733.03,604.4 733.35,600.0 733.68,597.8 734.00,595.1 734.32,592.2 734.65,588.6 734.97,584.8 735.29,580.7 735.61,578.3 735.94,574.5 736.26,571.2 736.58,569.5 736.90,565.6 737.23,561.8 737.55,560.1 737.87,556.4 738.19,554.2 738.52,552.3 738.84,548.8 739.16,547.1 739.48,544.2 739.81,542.2 740.13,540.0 740.45,537.1 740.77,534.5 741.10,532.2 741.42,530.3 741.74,527.4 742.06,525.2 742.39,522.4 742.71,519.2 743.03,516.9 743.35,513.2 743.68,510.9 744.00,507.8 744.32,504.4 744.65,501.4 744.97,498.3 745.29,495.3 745.61,491.9 745.94,488.9 746.26,485.8 746.58,482.7 746.90,479.6 747.23,476.3 747.55,473.3 747.87,470.0 748.19,466.6 748.52,463.4 748.84,460.3 749.16,457.3 749.48,453.8 749.81,450.5 750.13,447.3 750.45,444.0 750.77,440.7 751.10,437.6 751.42,434.3 751.74,431.0 752.06,427.6 752.39,424.3 752.71,421.1 753.03,417.8 753.35,414.5 753.68,411.3 754.00,407.9 754.32,404.7 754.65,401.5 754.97,398.3 755.29,395.0 755.61,391.9 755.94,388.7 756.26,385.5 756.58,382.3 756.90,379.1 757.23,376.0 757.55,372.7 757.87,369.4 758.19,366.1 758.52,362.8 758.84,359.4 759.16,356.0 759.48,352.6 759.81,349.0 760.13,345.4 760.45,341.8 760.77,338.1 761.10,334.3 761.42,330.4 761.74,326.5 762.06,322.3 762.39,317.9 762.71,313.3 763.03,308.6 763.35,303.7 763.68,298.7 764.00,293.8 764.32,288.8 764.65,283.9 764.97,279.0 765.29,274.4 765.61,269.9 765.94,265.6 766.26,261.6 766.58,257.9 766.90,254.3 767.23,250.8 767.55,247.3 767.87,243.6 768.19,239.7 768.52,235.7 768.84,231.7 769.16,227.6 769.48,223.3 769.81,218.6 770.13,213.2 770.45,207.1 770.77,198.7 771.10,188.5 771.42,178.2 771.74,169.5 772.06,162.0 772.39,155.3 772.71,149.9 773.03,145.5 773.35,141.6 773.68,138.0 774.00,134.7 774.32,131.5 774.65,128.4 774.97,125.5 775.29,122.7 775.61,120.1 775.94,117.5 776.26,115.0 776.58,112.5 776.90,109.7 777.23,106.9 777.55,104.4 777.87,102.3 778.19,101.0 778.52,100.3 778.84,99.8 779.16,99.3 779.48,98.8 779.81,98.4 780.13,98.1 780.45,97.7 780.77,97.5 781.10,97.2 781.42,97.0 781.74,96.8 782.06,96.6 782.39,96.4 782.71,96.3 783.03,96.1 783.35,96.0 783.68,95.8 784.00,95.7 784.32,95.6 784.65,95.5 784.97,95.3 785.29,95.2 785.61,95.1 785.94,95.0 786.26,94.9 786.58,94.8 786.90,94.7 787.23,94.6 787.55,94.5 787.87,94.4 788.19,94.3 788.52,94.2 788.84,94.1 789.16,94.0 789.48,94.0 789.81,93.9 790.13,93.8 790.45,93.8 790.77,93.7 791.10,93.7 791.42,93.6 791.74,93.6 792.06,93.5 792.39,93.5 792.71,93.5 793.03,93.4 793.35,93.4 793.68,93.4 794.00,93.4 794.32,93.4 794.65,93.4 794.97,93.4 795.29,93.4 795.61,93.4 795.94,93.4 796.26,93.4 796.58,93.5 796.90,93.5 797.23,93.5 797.55,93.5 797.87,93.6 798.19,93.6 798.52,93.6 798.84,93.6 799.16,93.7 799.48,93.7 799.81,93.8 800.13,93.8 800.45,93.8 800.77,93.9 801.10,93.9 801.42,94.0 801.74,94.0 802.06,94.1 802.39,94.2 802.71,94.2 803.03,94.3 803.35,94.3 803.68,94.4 804.00,94.5 804.32,94.6 804.65,94.6 804.97,94.7 805.29,94.8 805.61,94.9 805.94,95.0 806.26,95.1 806.58,95.3 806.90,95.5 807.23,95.7 807.55,95.9 807.87,96.2 808.19,96.5 808.52,96.9 808.84,97.2 809.16,97.6 809.48,98.2 809.81,98.9 810.13,99.8 810.45,100.8 810.77,102.2 811.10,104.1 811.42,106.5 811.74,109.2 812.06,112.1 812.39,114.9 812.71,117.8 813.03,120.7 813.35,123.9 813.68,127.2 814.00,130.6 814.32,134.0 814.65,137.5 814.97,141.0 815.29,144.3 815.61,147.6 815.94,150.6 816.26,153.6 816.58,156.5 816.90,159.3 817.23,162.1 817.55,164.9 817.87,167.5 818.19,170.2 818.52,172.8 818.84,175.3 819.16,177.8 819.48,180.2 819.81,182.5 820.13,184.9 820.45,187.1 820.77,189.4 821.10,191.6 821.42,193.9 821.74,196.1 822.06,198.4 822.39,200.6 822.71,202.9 823.03,205.2 823.35,207.4 823.68,209.7 824.00,211.9 824.32,214.2 824.65,216.4 824.97,218.7 825.29,220.9 825.61,223.1 825.94,225.4 826.26,227.6 826.58,229.8 826.90,232.1 827.23,234.4 827.55,236.6 827.87,238.9 828.19,241.1 828.52,243.2 828.84,245.3 829.16,247.4 829.48,249.3 829.81,251.2 830.50,253.1 830.50,254.9 830.50,256.6 831.50,258.4 831.50,260.0 831.50,261.7 832.50,263.4 832.50,265.1 832.50,266.7 833.50,268.3 833.50,270.0 833.50,271.6 834.50,273.2 834.50,274.9 834.50,276.6 834.50,278.3 835.50,280.0 835.50,281.7 835.50,283.5 836.50,285.3 836.50,287.3 836.50,289.2 837.50,291.1 837.50,293.1 837.50,295.2 838.50,297.2 838.50,299.3 838.50,301.3 839.50,303.4 839.50,305.4 839.50,307.5 840.50,309.5 840.50,311.5 840.50,313.6 841.50,315.5 841.50,317.5 841.50,319.4 842.50,321.3 842.50,323.1 842.50,324.8 843.50,326.5 843.50,328.2 843.50,329.8 844.50,331.4 844.50,332.9 844.50,334.4 844.50,335.9 845.50,337.5 845.50,339.0 845.50,340.4 846.50,341.9 846.50,343.4 846.50,344.8 847.50,346.2 847.50,347.5 847.50,348.9 848.50,350.3 848.50,351.7 848.50,352.9 849.50,354.2 849.50,355.6 849.50,356.8 850.50,358.1 850.50,359.4 850.50,360.6 851.50,361.8 851.50,363.1 851.50,364.2 852.50,365.4 852.50,366.6 852.50,367.8 853.50,368.9 853.50,370.0 853.50,371.2 854.50,372.3 854.50,373.4 854.50,374.4 854.50,375.5 855.50,376.6 855.50,377.6 855.50,378.7 856.50,379.6 856.50,380.6 856.50,381.7 857.50,382.6 857.50,383.5 857.50,384.6 858.50,385.6 858.50,386.4 858.50,387.4 859.50,388.3 859.50,389.4 859.50,390.4 860.50,391.4 860.50,392.3 860.50,393.3 861.50,394.1 861.50,395.0 861.50,396.1 862.50,396.9 862.50,398.0 862.50,399.0 863.50,400.0 863.50,400.8 863.50,401.9 864.50,402.8 864.50,404.0 864.50,404.8 864.50,405.6 865.50,406.8 865.50,407.4 865.50,408.4 866.50,409.2 866.50,410.2 866.50,410.9 867.50,411.7 867.50,412.4 867.50,413.5 868.50,414.1 868.50,415.1 868.50,415.8 869.50,416.7 869.50,417.4 869.50,418.4 870.50,419.0 870.50,419.9 870.50,420.6 871.50,421.3 871.50,422.1 871.50,422.9 872.50,423.5 872.50,424.3 872.50,425.1 873.50,425.7 873.50,426.6 873.50,427.3 874.50,427.9 874.50,428.8 874.50,429.3 874.50,430.3 875.50,430.9 875.50,431.6 875.50,432.4 876.50,433.0 876.50,433.8 876.50,434.6 877.50,434.9 877.50,435.8 877.50,436.3 878.50,437.2 878.50,437.7 878.50,438.6 879.50,438.9 879.50,439.8 879.50,440.5 880.50,441.4 880.50,441.9 880.50,442.3 881.50,442.9 881.50,443.5 881.50,444.2 882.50,444.6 882.50,445.5 882.50,446.1 883.50,446.8 883.50,447.5 883.50,447.9 884.50,448.6 884.50,449.2 884.50,449.7 884.50,450.4 885.50,450.9 885.50,451.5 885.50,452.3 886.50,452.9 886.50,453.2 886.50,454.0 887.50,454.5 887.50,455.3 887.50,456.1 888.50,456.7 888.50,457.0 888.50,457.5 889.50,457.6 889.50,458.4 889.50,458.9 890.50,459.4 890.50,460.3 890.50,460.6 891.50,461.1 891.50,461.3 891.50,462.2 892.50,462.9 892.50,463.1 892.50,463.7 893.50,464.1 893.50,464.6 893.50,465.1 894.50,465.8 894.50,466.3 894.50,466.4 894.50,467.4 895.50,467.7 895.50,468.5 895.50,469.1 896.50,469.2 896.50,469.8 896.50,470.1 897.50,470.6 897.50,471.3 897.50,471.9 898.50,471.9 898.50,472.7 898.50,472.8 899.50,473.5 899.50,473.9 899.50,474.4 900.50,474.9 900.50,475.4 900.50,475.4 901.50,476.4 901.50,476.9 901.50,477.0 902.50,477.6 902.50,477.7 902.50,478.3 903.50,478.5 903.50,479.1 903.50,479.7 904.50,480.0 904.50,480.2 904.50,480.9 904.50,481.3 905.50,481.6 905.50,481.8 905.50,482.0 906.50,482.6 906.50,483.0 906.50,483.7 907.50,483.7 907.50,484.1 907.50,485.2 908.50,485.3 908.50,485.8 908.50,486.1 909.50,486.6 909.50,487.1 909.50,487.7 910.50,488.0 910.50,488.4 910.50,488.6 911.50,489.1 911.50,489.7 911.50,490.1 912.50,490.6 912.50,490.4 912.50,490.9 913.50,491.2 913.50,491.5 913.50,491.9 914.50,492.5 914.50,492.9 914.50,493.4 914.50,493.7 915.50,493.8 915.50,493.8 915.50,494.9 916.50,495.2 916.50,494.9 916.50,496.1 917.50,496.6 917.50,496.9 917.50,497.3 918.50,498.0 918.50,497.5 918.50,498.5 919.50,498.4 919.50,498.7 919.50,498.8 920.50,499.3 920.50,499.7 920.50,500.2 921.50,500.3 921.50,500.9 921.50,501.4 922.50,502.0 922.50,502.3 922.50,502.4 923.50,503.3 923.50,503.3 923.50,503.7 924.50,503.8 924.50,504.8 924.50,505.2 924.50,505.3 925.50,505.8 925.50,506.8 925.50,506.1 926.50,506.8 926.50,507.2 926.50,507.8 927.50,507.7 927.50,508.2 927.50,507.9 928.50,508.5 928.50,508.6 928.50,509.7 929.50,510.0 929.50,510.3 929.50,510.8 930.50,510.5 930.50,511.2 930.50,512.0 931.50,512.1 931.50,511.7 931.50,512.7 932.50,512.8 932.50,513.9 932.50,513.9 933.50,514.1 933.50,514.5 933.50,514.8 934.50,515.1 934.50,515.2 934.50,516.5 934.50,516.2 935.50,516.3 935.50,516.8 935.50,516.7 936.50,517.5 936.50,517.9 936.50,518.4 937.50,518.3 937.50,519.5 937.50,519.8 938.50,520.2 938.50,520.4 938.50,521.1 939.50,521.8 939.50,521.6 939.50,522.6 940.50,522.8 940.50,523.6 940.50,523.2 941.50,523.6 941.50,524.6 941.50,524.4 942.50,524.4 942.50,525.2 942.50,525.9 943.50,525.7 943.50,525.9 943.50,527.4 944.50,526.8 944.50,527.5 944.50,527.5 944.50,528.6 945.50,528.2 945.50,528.7 945.50,528.9 946.50,529.5 946.50,529.4 946.50,530.2 947.50,530.6 947.50,531.1 947.50,531.6 948.50,531.1 948.50,531.4 948.50,531.4 949.50,531.7 949.50,531.8 949.50,532.4 950.50,533.2 950.50,533.1 950.50,533.0 951.50,534.7 951.50,534.7 951.50,534.4 952.50,535.1 952.50,534.5 952.50,535.4 953.50,535.9 953.50,536.2 953.50,535.6 954.50,537.4 954.50,536.7 954.50,538.0 954.50,536.8 955.50,537.2 955.50,537.3 955.50,536.9 956.50,538.3 956.50,538.1 956.50,538.8 957.50,538.9 957.50,540.1 957.50,539.5 958.50,540.4 958.50,539.8 958.50,540.3 959.50,541.1 959.50,541.2 959.50,541.5 960.50,541.9 960.50,540.9 960.50,542.9 961.50,543.2 961.50,543.3 961.50,542.8 962.50,542.9 962.50,542.8 962.50,543.1 963.50,543.9 963.50,544.4 963.50,545.3 964.50,544.5 964.50,544.5 964.50,545.4 964.50,545.1 965.50,546.0 965.50,545.8 965.50,546.0 966.50,545.8 966.50,547.4 966.50,546.8 967.50,546.5 967.50,547.0 967.50,547.1 968.50,549.1 968.50,548.5 968.50,548.6 969.50,549.2 969.50,550.6 969.50,548.9 970.50,549.7 970.50,551.1 970.50,550.2 971.50,549.9 971.50,549.4 971.50,549.7 972.50,550.9 972.50,551.0 972.50,550.8 973.50,550.6 973.50,551.8 973.50,552.0 974.50,551.3 974.50,551.6 974.50,550.8 974.50,551.3 975.50,551.0 975.50,553.1 975.50,553.0 976.50,553.5 976.50,553.4 976.50,553.2 977.50,553.9 977.50,553.7 977.50,554.8 978.50,553.8 978.50,554.1 978.50,556.2 979.50,556.0 979.50,555.9 979.50,555.1 980.50,555.3 980.50,554.7 980.50,557.2 981.50,556.3 981.50,556.9 981.50,557.5 982.50,557.8 982.50,559.6 982.50,558.1 983.50,558.7 983.50,559.5 983.50,557.6 984.50,559.4 984.50,558.9 984.50,559.9 984.50,560.8 985.50,560.2 985.50,559.8 985.50,561.0 986.50,560.0 986.50,559.2 986.50,559.7 987.50,561.0 987.50,561.6 987.50,560.4 988.50,562.3 988.50,562.2 988.50,560.2 989.50,561.5 989.50,561.7 989.50,562.7 990.50,560.5 990.50,560.5 990.50,563.4 991.50,562.8 991.50,563.9 991.50,563.4 992.50,563.0 992.50,563.4 992.50,565.1 993.50,565.0 993.50,563.4 993.50,565.3 994.50,565.0 994.50,565.8 994.50,566.3 994.50,567.1 995.50,566.9 995.50,567.5 995.50,567.1 996.50,567.1 996.50,566.1 996.50,568.7 997.50,567.2 997.50,569.7 997.50,565.6 998.50,568.5 998.50,567.8 998.50,566.4 999.50,568.3 999.50,568.3 999.50,568.5 1000.50,568.6 1000.50,569.9 1000.50,568.0 1001.50,568.7 1001.50,569.8 1001.50,568.8 1002.50,570.2 1002.50,570.8 1002.50,570.7 1003.50,570.5 1003.50,572.9 1003.50,572.0 1004.50,571.4 1004.50,573.1 1004.50,571.7 1004.50,573.1 1005.50,571.8 1005.50,572.1 1005.50,571.7 1006.50,572.8 1006.50,574.1 1006.50,574.8 1007.50,568.4 1007.50,573.9 1007.50,573.6 1008.50,574.9 1008.50,572.1 1008.50,573.3 1009.50,573.5 1009.50,576.1 1009.50,574.1 1010.50,576.4 1010.50,574.5 1010.50,576.3 1011.50,579.2 1011.50,577.1 1011.50,578.4 1012.50,575.0 1012.50,579.5 1012.50,578.6 1013.50,578.8 1013.50,579.6 1013.50,579.5 1014.50,578.6 1014.50,578.0 1014.50,578.7 1014.50,578.3 1015.50,577.9 1015.50,578.9 1015.50,578.1 1016.50,578.0 1016.50,577.2 1016.50,578.1 1017.50,579.0 1017.50,579.1 1017.50,581.8 1018.50,579.8 1018.50,582.1 1018.50,582.1 1019.50,582.7 1019.50,581.6 1019.50,583.4 1020.50,581.9 1020.50,583.1 1020.50,583.1 1021.50,581.7 1021.50,583.1 1021.50,580.1 1022.50,582.4 1022.50,582.1 1022.50,580.1 1023.50,583.7 1023.50,581.4 1023.50,583.2 1024.50,584.1 1024.50,584.8 1024.50,587.1 1024.50,584.1 1025.50,585.9 1025.50,585.9 1025.50,585.6 1026.50,585.3 1026.50,586.1 1026.50,587.8 1027.50,588.4 1027.50,588.7 1027.50,587.5 1028.50,585.4 1028.50,588.5 1028.50,586.9 1029.50,585.4 1029.50,586.6 1029.50,586.4 1030.50,587.7 1030.50,586.1 1030.50,587.5 1031.50,587.9 1031.50,587.8 1031.50,586.8 1032.50,586.0 1032.50,589.3 1032.50,587.0 1033.50,589.5 1033.50,590.5 1033.50,589.0 1034.50,588.2 1034.50,588.5 1034.50,588.3 1034.50,592.3 1035.50,587.4 1035.50,588.5 1035.50,588.8 1036.50,592.3 1036.50,589.1 1036.50,590.7 1037.50,590.8 1037.50,590.2 1037.50,593.0 1038.50,588.9 1038.50,589.1 1038.50,589.3 1039.50,588.2 1039.50,593.0 1039.50,590.8 1040.50,591.2 1040.50,593.3 1040.50,590.8 1041.50,589.1 1041.50,595.7 1041.50,593.4 1042.50,594.4 1042.50,594.1 1042.50,593.8 1043.50,592.3 1043.50,594.1 1043.50,593.6 1044.50,590.3 1044.50,593.3 1044.50,594.0 1044.50,597.6 1045.50,594.5 1045.50,594.9 1045.50,595.7 1046.50,593.6 1046.50,599.8 1046.50,594.4 1047.50,598.5 1047.50,597.2 1047.50,598.6 1048.50,593.4 1048.50,594.8 1048.50,595.3 1049.50,594.6 1049.50,598.5 1049.50,596.2 1050.50,595.0 1050.50,597.0 1050.50,596.4 1051.50,599.6 1051.50,596.7 1051.50,597.5 1052.50,596.7 1052.50,594.3 1052.50,597.1 1053.50,598.6 1053.50,597.2 1053.50,600.7 1054.50,596.1 1054.50,599.8 1054.50,600.4 1054.50,599.9 1055.50,603.7 1055.50,601.3 1055.50,601.7 1056.50,596.9 1056.50,598.1 1056.50,597.3 1057.50,600.9 1057.50,600.8 1057.50,599.5 1058.50,603.5 1058.50,604.3 1058.50,599.3 1059.50,601.3 1059.50,601.1 1059.50,605.6 1060.50,603.1 1060.50,603.7 1060.50,604.8 1061.50,603.0 1061.50,605.7 1061.50,606.4 1062.50,599.6 1062.50,602.3 1062.50,605.3 1063.50,598.5 1063.50,601.8 1063.50,602.5 1064.50,609.6 1064.50,600.7 1064.50,603.7 1064.50,601.5 1065.50,600.5 1065.50,607.0 1065.50,600.2 1066.50,602.4 1066.50,604.1 1066.50,609.9 1067.50,600.6 1067.50,604.3 1067.50,603.7 1068.50,607.5 1068.50,603.2 1068.50,602.9 1069.50,600.8 1069.50,606.3 1069.50,609.5 1070.50,606.0 1070.50,606.7 1070.50,603.6 1071.50,604.1 1071.50,602.9 1071.50,600.4 1072.50,599.7 1072.50,603.8 1072.50,608.6 1073.50,606.0 1073.50,607.7 1073.50,608.3 1074.50,608.9 1074.50,608.6 1074.50,614.0 1074.50,607.1 1075.50,607.2 1075.50,607.5 1075.50,608.6 1076.50,606.1 1076.50,612.4 1076.50,608.5 1077.50,607.0 1077.50,609.9 1077.50,609.5 1078.50,607.4 1078.50,610.7 1078.50,612.4 1079.50,610.6 1079.50,607.5 1079.50,610.8 1080.50,607.6 1080.50,608.9 1080.50,608.2 1081.50,607.1 1081.50,608.1 1081.50,610.0 1082.50,609.8 1082.50,608.4 1082.50,612.4 1083.50,610.1 1083.50,614.6 1083.50,609.0 1084.50,612.5 1084.50,615.9 1084.50,613.6 1084.50,609.4 1085.50,609.6 1085.50,613.8 1085.50,604.7 1086.50,608.4 1086.50,608.2 1086.50,610.3 1087.50,612.0 1087.50,613.8 1087.50,609.0 1088.50,609.2 1088.50,610.0 1088.50,607.6 1089.50,609.2 1089.50,613.5 1089.50,612.5 1090.50,609.0 1090.50,616.3 1090.50,606.8 1091.50,614.0 1091.50,605.3 1091.50,610.1 1092.50,614.7 1092.50,608.1 1092.50,607.9 1093.50,609.3 1093.50,608.6 1093.50,609.5 1094.50,620.1 1094.50,609.4 1094.50,612.7 1094.50,611.8 1095.50,609.7 1095.50,611.6 1095.50,615.5 1096.50,610.3 1096.50,614.2 1096.50,613.1 1097.50,615.9 1097.50,613.5 1097.50,615.4 1098.50,607.3 1098.50,614.3 1098.50,608.6 1099.50,617.5 1099.50,612.4 1099.50,615.0 1100.50,611.9 1100.50,614.0 1100.50,608.1 1101.50,605.5 1101.50,614.6 1101.50,610.3 1102.50,614.9 1102.50,615.2 1102.50,612.9 1103.50,610.6 1103.50,611.9 1103.50,614.8 1104.50,611.3 1104.50,618.7 1104.50,618.2 1104.50,615.8 1105.50,622.2 1105.50,612.4 1105.50,617.2 1106.50,618.2 1106.50,615.8 1106.50,621.0 1107.50,616.7 1107.50,621.3 1107.50,615.4 1108.50,613.7 1108.50,609.0 1108.50,613.9 1109.50,610.4 1109.50,615.4 1109.50,621.3 1110.50,615.0 1110.50,618.3 1110.50,621.0 1111.50,616.6 1111.50,623.8 1111.50,621.6 1112.50,618.1 1112.50,617.8 1112.50,622.9 1113.50,619.7 1113.50,620.5 1113.50,618.7 1114.50,621.7 1114.50,629.0 1114.50,622.5 1114.50,615.9 1115.50,624.7 1115.50,622.3 1115.50,618.6 1116.50,622.2 1116.50,625.1 1116.50,620.8 1117.50,620.8 1117.50,622.2 1117.50,619.1 1118.50,623.2 1118.50,623.9 1118.50,622.5 1119.50,619.4 1119.50,618.9 1119.50,621.7 1120.50,616.3 1120.50,620.0 1120.50,623.0 1121.50,620.4 1121.50,620.3 1121.50,624.2 1122.50,629.8 1122.50,623.6 1122.50,621.3 1123.50,622.4 1123.50,622.9 1123.50,620.4 1124.50,619.6 1124.50,628.4 1124.50,616.3 1124.50,622.9 1125.50,616.9 1125.50,625.1 1125.50,628.9 1126.50,621.3 1126.50,623.3 1126.50,618.9 1127.50,622.9 1127.50,622.4 1127.50,623.6 1128.50,623.7 1128.50,620.7 1128.50,628.5 1129.50,622.7 1129.50,620.5 1129.50,628.8 1130.50,625.3 1130.50,627.3 1130.50,625.2 1131.50,622.6 1131.50,620.4 1131.50,619.6 1132.50,625.2 1132.50,619.8 1132.50,625.0 1133.50,627.1 1133.50,626.4 1133.50,632.6 1134.50,624.5 1134.50,632.9 1134.50,624.0 1134.50,613.8 1135.50,627.3 1135.50,631.5 1135.50,620.1 1136.50,625.7 1136.50,622.1 1136.50,623.1 1137.50,623.6 1137.50,616.5 1137.50,625.3 1138.50,626.3 1138.50,628.5 1138.50,630.2 1139.50,631.9 1139.50,634.5 1139.50,625.8 1140.50,630.1 1140.50,626.3 1140.50,626.7 1141.50,618.7 1141.50,628.4 1141.50,625.1 1142.50,631.6 1142.50,624.1 1142.50,631.0 1143.50,630.3 1143.50,637.1 1143.50,628.4 1144.50,622.7 1144.50,624.5 1144.50,635.6 1144.50,626.3 1145.50,633.7 1145.50,637.8 1145.50,634.8 1146.50,623.0 1146.50,630.5 1146.50,635.5 1147.50,628.3 1147.50,628.7 1147.50,631.4 1148.50,627.0 1148.50,629.7 1148.50,621.0 1149.50,621.6 1149.50,624.4 1149.50,622.9 1150.50,621.3 1150.50,627.1 1150.50,626.0 1151.50,630.2 1151.50,631.4 1151.50,638.8 1152.50,635.9 1152.50,634.3 1152.50,629.8 1153.50,618.7 1153.50,635.8 1153.50,632.2 1154.50,636.6 1154.50,630.3 1154.50,628.1 1154.50,622.6 1155.50,632.2 1155.50,623.4 1155.50,625.1 1156.50,628.6 1156.50,633.5 1156.50,631.9 1157.50,626.9 1157.50,623.0 1157.50,626.0 1158.50,629.3 1158.50,625.7 1158.50,633.4 1159.50,625.7 1159.50,616.6 1159.50,634.4 1160.50,626.0 1160.50,637.8 1160.50,631.7 1161.50,630.1 1161.50,626.5 1161.50,631.8 1162.50,624.4 1162.50,636.6 1162.50,629.8 1163.50,627.9 1163.50,626.6 1163.50,626.6 1164.50,617.6 1164.50,627.0 1164.50,621.8 1164.50,625.9 1165.50,620.3 1165.50,632.9 1165.50,629.6 1166.50,631.2 1166.50,653.7 1166.50,631.5 1167.50,627.4 1167.50,623.7 1167.50,634.5 1168.50,631.1 1168.50,623.7 1168.50,636.1 1169.50,634.9 1169.50,628.3 1169.50,628.0 1170.50,625.1 1170.50,626.2 1170.50,630.7 1171.50,637.3 1171.50,634.5 1171.50,631.7 1172.50,630.0 1172.50,632.0 1172.50,629.2 1173.50,638.4 1173.50,636.5 1173.50,642.1 1174.50,624.4 1174.50,634.3 1174.50,627.6 1174.50,625.4 1175.50,629.3 1175.50,631.8 1175.50,633.7 1176.50,632.4 1176.50,637.8 1176.50,633.5 1177.50,627.0 1177.50,628.9 1177.50,626.0 1178.50,627.3 1178.50,627.5 1178.50,630.6 1179.50,630.2 1179.50,626.7 1179.50,633.1 1180.50,638.9 1180.50,628.2 1180.50,633.2 1181.50,628.6 1181.50,638.1 1181.50,644.0 1182.50,636.9 1182.50,640.2 1182.50,642.8 1183.50,629.5 1183.50,636.3 1183.50,644.7 1184.50,647.3 1184.50,637.9 1184.50,633.3 1184.50,633.4 1185.50,628.2 1185.50,631.8 1185.50,630.9 1186.50,644.8 1186.50,627.6 1186.50,638.3 1187.50,631.1 1187.50,645.8 1187.50,642.3 1188.50,630.6 1188.50,643.2 1188.50,634.9 1189.50,637.5 1189.50,626.5 1189.50,634.0 1190.50,629.2 1190.50,635.6 1190.50,643.7 1191.50,621.5 1191.50,633.3 1191.50,627.4 1192.50,626.2 1192.50,634.9 1192.50,625.5 1193.50,633.2 1193.50,643.5 1193.50,642.7 1194.50,650.5 1194.50,642.2 1194.50,639.6 1194.50,645.1 1195.50,640.5 1195.50,644.6 1195.50,640.4 1196.50,646.4 1196.50,648.4 1196.50,652.0 1197.50,653.4 1197.50,649.5 1197.50,639.7 1198.50,642.0 1198.50,630.3 1198.50,631.6 1199.50,644.2 1199.50,634.6 1199.50,631.7 1200.50,642.8 1200.50,633.1 1200.50,644.7 1201.50,631.5 1201.50,637.7 1201.50,642.0 1202.50,650.2 1202.50,639.9 1202.50,643.1 1203.50,634.6 1203.50,642.8 1203.50,635.1 1204.50,640.9 1204.50,636.0 1204.50,636.2 1204.50,641.0 1205.50,639.6 1205.50,636.3 1205.50,648.0 1206.50,639.2 1206.50,640.9 1206.50,632.7 1207.50,641.7 1207.50,633.5 1207.50,647.3 1208.50,629.5 1208.50,632.4 1208.50,632.0 1209.50,629.1 1209.50,641.4 1209.50,636.4 1210.50,635.1 1210.50,636.7 1210.50,639.6 1211.50,632.4 1211.50,637.1 1211.50,638.3 1212.50,637.6 1212.50,630.8 1212.50,628.6 1213.50,633.2 1213.50,637.3 1213.50,650.1 1214.50,647.6 1214.50,651.9 1214.50,653.8 1214.50,640.0 1215.50,649.9 1215.50,636.9 1215.50,642.6 1216.50,641.9 1216.50,639.6 1216.50,644.5 1217.50,637.1 1217.50,629.5 1217.50,629.6 1218.50,632.3 1218.50,629.9 1218.50,633.1 1219.50,632.5 1219.50,624.4 1219.50,637.8 1220.50,650.2 1220.50,653.6 1220.50,646.3 1221.50,640.7 1221.50,635.9 1221.50,640.1 1222.50,639.9 1222.50,634.8 1222.50,644.1 1223.50,637.7 1223.50,633.8 1223.50,638.0 1224.50,641.4 1224.50,633.3 1224.50,632.4 1224.50,639.7 1225.50,656.6 1225.50,644.0 1225.50,642.3 1226.50,635.3 1226.50,638.1 1226.50,636.1 1227.50,628.2 1227.50,626.7 1227.50,633.7 1228.50,642.7 1228.50,646.3 1228.50,636.5 1229.50,645.8 1229.50,641.9 1229.50,643.4 1230.50,641.4 1230.50,638.3 1230.50,646.6 1231.50,640.4 1231.50,638.1 1231.50,637.2 1232.50,646.4 1232.50,628.4 1232.50,647.6 1233.50,634.1 1233.50,650.3 1233.50,635.0 1234.50,651.5 1234.50,635.4 1234.50,640.2 1234.50,636.7 1235.50,646.0 1235.50,640.1 1235.50,639.3 1236.50,641.5 1236.50,645.6 1236.50,635.3 1237.50,655.1 1237.50,653.2 1237.50,651.1 1238.50,634.9 1238.50,649.2 1238.50,649.6 1239.50,651.6 1239.50,650.5 1239.50,651.4 1240.50,653.0 1240.50,658.1 1240.50,644.5 1241.50,646.6 1241.50,636.3 1241.50,645.1 1242.50,649.5 1242.50,660.2 1242.50,650.3 1243.50,646.4 1243.50,638.2 1243.50,644.0 1244.50,639.3 1244.50,638.4 1244.50,631.3 1244.50,632.4 1245.50,638.2 1245.50,647.6 1245.50,630.7 1246.50,639.1 1246.50,646.1 1246.50,650.6 1247.50,654.2 1247.50,641.9 1247.50,644.6 1248.50,645.4 1248.50,641.8 1248.50,655.0 1249.50,649.9 1249.50,654.2 1249.50,653.6 1250.50,659.1 1250.50,644.9 1250.50,631.5 1251.50,638.5 1251.50,633.2 1251.50,634.7 1252.50,625.9 1252.50,628.6 1252.50,640.8 1253.50,640.0 1253.50,631.7 1253.50,638.0 1254.50,641.2 1254.50,637.6 1254.50,644.5 1254.50,649.6 1255.50,633.4 1255.50,648.8 1255.50,658.8 1256.50,645.0 1256.50,643.2 1256.50,632.4 1257.50,638.9 1257.50,643.1 1257.50,636.2 1258.50,645.1 1258.50,639.1 1258.50,634.5 1259.50,643.9 1259.50,652.9 1259.50,647.5 1260.50,647.2 1260.50,639.2 1260.50,646.0 1261.50,644.6 1261.50,651.1 1261.50,643.8 1262.50,650.3 1262.50,645.2 1262.50,648.1 1263.50,641.3 1263.50,647.1 1263.50,652.4 1264.50,654.5 1264.50,644.8 1264.50,639.0 1264.50,633.0 1265.50,643.2 1265.50,645.1 1265.50,652.2 1266.50,647.8 1266.50,644.2 1266.50,646.3 1267.50,647.4 1267.50,643.9 1267.50,644.1 1268.50,657.0 1268.50,645.4 1268.50,646.0 1269.50,644.2 1269.50,644.7 1269.50,652.2 1270.50,635.8 1270.50,637.6 1270.50,636.9 1271.50,635.1 1271.50,637.7 1271.50,637.4 1272.50,638.6 1272.50,649.3 1272.50,652.3 1273.50,640.8 1273.50,651.0 1273.50,633.0 1274.50,650.8 1274.50,642.1 1274.50,642.7 1274.50,639.5 1275.50,646.5 1275.50,639.7 1275.50,631.2 1276.50,647.3 1276.50,661.0 1276.50,642.3 1277.50,644.1 1277.50,642.9 1277.50,651.9 1278.50,642.4 1278.50,640.1 1278.50,647.5 1279.50,644.7 1279.50,643.1 1279.50,642.4 1280.50,650.2 1280.50,648.2 1280.50,637.6 1281.50,636.6 1281.50,654.1 1281.50,632.5 1282.50,644.7 1282.50,635.1 1282.50,647.4 1283.50,641.7 1283.50,645.8 1283.50,639.5 1284.50,645.5 1284.50,646.3 1284.50,648.4 1284.50,650.5 1285.50,646.3 1285.50,651.4 1285.50,653.8 1286.50,656.7 1286.50,660.7 1286.50,658.9 1287.50,652.8 1287.50,648.1 1287.50,654.4 1288.50,638.4 1288.50,640.3 1288.50,644.7 1289.50,640.2 1289.50,640.9 1289.50,652.3 1290.50,637.0 1290.50,640.8 1290.50,655.0 1291.50,639.7 1291.50,649.1 1291.50,647.1 1292.50,656.6 1292.50,645.5 1292.50,642.0 1293.50,646.7 1293.50,643.6 1293.50,655.9 1294.50,640.3 1294.50,643.6 1294.50,644.7 1294.50,641.3 1295.50,639.9 1295.50,647.1 1295.50,640.8 1296.50,635.4 1296.50,652.8 1296.50,643.7 1297.50,653.9 1297.50,643.0 1297.50,637.8 1298.50,647.3 1298.50,656.5 1298.50,652.7 1299.50,646.0 1299.50,658.6 1299.50,656.6 1300.50,643.6 1300.50,656.2 1300.50,646.9 1301.50,655.5 1301.50,659.9 1301.50,645.1 1302.50,643.6 1302.50,655.3 1302.50,635.1 1303.50,646.3 1303.50,642.4 1303.50,643.9 1304.50,651.0 1304.50,638.5 1304.50,645.1 1304.50,644.7 1305.50,648.5 1305.50,653.4 1305.50,636.6 1306.50,646.3 1306.50,652.3 1306.50,645.5 1307.50,657.2 1307.50,648.0 1307.50,634.2 1308.50,654.8 1308.50,646.3 1308.50,655.3 1309.50,645.9 1309.50,638.3 1309.50,650.7 1310.50,649.9 1310.50,637.3 1310.50,643.3 1311.50,641.7 1311.50,643.0 1311.50,655.3 1312.50,656.7 1312.50,657.4 1312.50,641.1 1313.50,651.2 1313.50,651.6 1313.50,642.8 1314.50,640.6 1314.50,639.0 1314.50,653.6 1314.50,635.3 1315.50,650.3 1315.50,644.1 1315.50,646.0 1316.50,649.9 1316.50,643.3 1316.50,643.0 1317.50,638.1 1317.50,632.9 1317.50,629.3 1318.50,638.1 1318.50,639.7 1318.50,646.5 1319.50,656.4 1319.50,645.4 1319.50,655.3 1320.50,654.6 1320.50,656.2 1320.50,650.0 1321.50,654.6 1321.50,635.3 1321.50,642.5 1322.50,649.4 1322.50,643.3 1322.50,638.5 1323.50,656.9 1323.50,650.2 1323.50,658.4 1324.50,656.0 1324.50,661.2 1324.50,655.1 1324.50,650.8 1325.50,648.4 1325.50,662.5 1325.50,646.3 1326.50,648.6 1326.50,656.1 1326.50,652.2 1327.50,641.7 1327.50,652.6 1327.50,655.2 1328.50,644.2 1328.50,648.5 1328.50,641.7 1329.50,646.6 1329.50,640.5 1329.50,651.4 1330.50,650.9 1330.50,640.0 1330.50,634.8 1331.50,641.9 1331.50,635.2 1331.50,637.6 1332.50,641.7 1332.50,654.8 1332.50,633.3 1333.50,640.1 1333.50,665.1 1333.50,643.4 1334.50,652.5 1334.50,656.2 1334.50,652.6 1334.50,643.3 1335.50,648.7 1335.50,648.9 1335.50,648.2 1336.50,649.4 1336.50,642.7 1336.50,660.4 1337.50,655.9 1337.50,648.2 1337.50,654.8 1338.50,645.8 1338.50,648.4 1338.50,642.3 1339.50,645.0 1339.50,640.4 1339.50,644.8 1340.50,641.5 1340.50,649.8 1340.50,662.8 1341.50,650.1 1341.50,651.2 1341.50,654.9 1342.50,643.9 1342.50,646.3 1342.50,640.4 1343.50,653.7 1343.50,653.7 1343.50,649.1 1344.50,642.5 1344.50,657.1 1344.50,649.2 1344.50,651.7 1345.50,654.0 1345.50,643.6 1345.50,643.1 1346.50,641.8 1346.50,648.7 1346.50,641.3 1347.50,651.9 1347.50,637.4 1347.50,649.8 1348.50,646.6 1348.50,642.8 1348.50,653.2 1349.50,652.0 1349.50,659.5 1349.50,636.6 1350.50,659.4 1350.50,651.6 1350.50,648.1 1351.50,629.7 1351.50,650.1 1351.50,647.3 1352.50,645.0 1352.50,669.9 1352.50,649.5 1353.50,655.1 1353.50,647.0 1353.50,646.8 1354.50,653.5 1354.50,647.9 1354.50,658.6 1354.50,658.7 1355.50,650.4 1355.50,646.6 1355.50,649.2 1356.50,644.8 1356.50,642.9 1356.50,636.9 1357.50,650.0 1357.50,652.0 1357.50,645.7 1358.50,646.1 1358.50,643.0 1358.50,634.8 1359.50,648.4 1359.50,637.6 1359.50,633.0 1360.50,632.1 1360.50,649.2 1360.50,642.5 1361.50,634.5 1361.50,643.7 1361.50,642.6 1362.50,647.5 1362.50,639.3 1362.50,645.1 1363.50,648.4 1363.50,642.9 1363.50,636.4 1364.50,641.7 1364.50,653.1 1364.50,658.4 1364.50,640.6 1365.50,656.6 1365.50,645.5 1365.50,651.9 1366.50,645.9 1366.50,652.8 1366.50,666.3 1367.50,640.5 1367.50,651.0 1367.50,653.1 1368.50,641.5 1368.50,648.3 1368.50,645.9 1369.50,654.7 1369.50,652.5 1369.50,651.3 1370.50,659.7 1370.50,649.3 1370.50,651.3 1371.50,654.7 1371.50,654.0 1371.50,642.6 1372.50,647.6 1372.50,642.3 1372.50,642.2 1373.50,646.6 1373.50,672.3 1373.50,646.7 1374.50,644.6 1374.50,655.6 1374.50,656.5 1374.50,644.2 1375.50,658.0 1375.50,640.1 1375.50,642.2 1376.50,636.1 1376.50,642.0 1376.50,641.5 1377.50,639.7 1377.50,651.7 1377.50,646.1 1378.50,633.9 1378.50,644.7 1378.50,646.6 1379.50,638.7 1379.50,633.2 1379.50,642.2 1380.50,643.1 1380.50,643.9 1380.50,642.8 1381.50,655.7 1381.50,645.6 1381.50,645.8 1382.50,641.3 1382.50,641.7 1382.50,643.4 1383.50,633.4 1383.50,643.5 1383.50,646.6 1384.50,637.2 1384.50,648.3 1384.50,655.5 1384.50,657.5 1385.50,655.1 1385.50,665.8 1385.50,646.3 1386.50,648.6 1386.50,642.1 1386.50,656.3 1387.50,651.5 1387.50,651.5 1387.50,642.8 1388.50,641.4 1388.50,637.4 1388.50,635.6 1389.50,644.1 1389.50,634.6 1389.50,635.5 1390.50,635.0 1390.50,635.2 1390.50,653.0 1391.50,646.7 1391.50,647.0 1391.50,652.5 1392.50,657.5 1392.50,640.9 1392.50,643.5 1393.50,637.0 1393.50,650.9 1393.50,657.9 1394.50,634.6 1394.50,639.3 1394.50,643.1 1394.50,633.8 1395.50,636.8 1395.50,648.3 1395.50,638.0 1396.50,650.0 1396.50,635.4 1396.50,645.4 1397.50,645.5 1397.50,630.9 1397.50,629.9 1398.50,636.9 1398.50,642.9 1398.50,633.1 1399.50,634.8 1399.50,634.6 1399.50,637.1 1400.50,642.1 1400.50,635.9 1400.50,626.0 1401.50,640.6 1401.50,640.5 1401.50,644.0 1402.50,641.4 1402.50,647.8 1402.50,654.9 1403.50,639.8 1403.50,647.8 1403.50,645.3 1404.50,648.9 1404.50,651.2 1404.50,635.9 1404.50,638.8 1405.50,634.3 1405.50,650.7 1405.50,629.5 1406.50,641.6 1406.50,640.2 1406.50,654.9 1407.50,648.5 1407.50,651.0 1407.50,644.4 1408.50,645.0 1408.50,662.6 1408.50,642.6 1409.50,639.9 1409.50,641.7 1409.50,637.5 1410.50,635.6 1410.50,634.0 1410.50,648.3 1411.50,647.5 1411.50,643.4 1411.50,640.0 1412.50,650.1 1412.50,643.4 1412.50,652.2 1413.50,644.6 1413.50,647.4 1413.50,645.0 1414.50,641.0 1414.50,654.9 1414.50,647.7 1414.50,662.0 1415.50,646.2 1415.50,635.1 1415.50,652.8 1416.50,643.5 1416.50,660.5 1416.50,634.8 1417.50,625.7 1417.50,642.1 1417.50,635.8 1418.50,630.5 1418.50,643.0 1418.50,636.8 1419.50,642.6 1419.50,640.8 1419.50,637.8 1420.50,632.8 1420.50,635.5 1420.50,638.0 1421.50,638.7 1421.50,631.6 1421.50,635.6 1422.50,637.4 1422.50,653.8 1422.50,645.0 1423.50,652.2 1423.50,635.6 1423.50,641.9 1424.50,636.7 1424.50,650.0 1424.50,653.4 1424.50,646.3 1425.50,636.1 1425.50,642.8 1425.50,634.5 1426.50,630.6 1426.50,641.6 1426.50,634.3 1427.50,655.3 1427.50,648.5 1427.50,645.6 1428.50,643.3 1428.50,650.2 1428.50,641.6 1429.50,631.6 1429.50,634.4 1429.50,636.0 1430.50,641.7 1430.50,630.7 1430.50,632.5 1431.50,645.2 1431.50,633.8 1431.50,641.4 1432.50,636.1 1432.50,636.9 1432.50,635.8 1433.50,630.8 1433.50,626.3 1433.50,639.2 1434.50,639.9 1434.50,642.2 1434.50,638.6 1434.50,636.8 1435.50,648.2 1435.50,638.3 1435.50,625.3 1436.50,632.2 1436.50,629.4 1436.50,634.7 1437.50,622.7 1437.50,630.2 1437.50,636.2 1438.50,639.8 1438.50,633.7 1438.50,628.1 1439.50,642.7 1439.50,644.8 1439.50,652.8 1440.50,633.2 1440.50,643.6 1440.50,641.0 1441.50,644.3 1441.50,644.9 1441.50,637.1 1442.50,649.6 1442.50,645.5 1442.50,652.1 1443.50,649.0 1443.50,641.3 1443.50,639.3 1444.50,648.7 1444.50,639.0 1444.50,643.1 1444.50,633.6 1445.50,641.9 1445.50,644.3 1445.50,634.5 1446.50,643.4 1446.50,637.7 1446.50,637.6 1447.50,646.0 1447.50,645.1 1447.50,638.2 1448.50,628.8 1448.50,639.3 1448.50,639.2 1449.50,644.3 1449.50,645.2 1449.50,635.2 1450.50,648.1 1450.50,648.4 1450.50,633.4 1451.50,647.0 1451.50,648.4 1451.50,638.6 1452.50,636.5 1452.50,633.6 1452.50,632.5 1453.50,664.9 1453.50,649.8 1453.50,650.0 1454.50,645.9 1454.50,652.8 1454.50,642.3 1454.50,640.1 1455.50,637.6 1455.50,642.0 1455.50,634.0 1456.50,641.1 1456.50,641.6 1456.50,638.9 1457.50,634.8 1457.50,655.5 1457.50,644.5 1458.50,636.7 1458.50,640.4 1458.50,648.3 1459.50,642.2 1459.50,634.5 1459.50,645.1 1460.50,649.0 1460.50,638.7 1460.50,644.7 1461.50,646.3 1461.50,635.3 1461.50,642.6 1462.50,638.1 1462.50,627.6 1462.50,633.3 1463.50,627.3 1463.50,646.2 1463.50,645.7 1464.50,642.6 1464.50,639.5 1464.50,651.6 1464.50,638.0 1465.50,642.8 1465.50,641.8 1465.50,636.6 1466.50,638.0 1466.50,642.1 1466.50,636.3 1467.50,641.6 1467.50,626.7 1467.50,636.3 1468.50,635.0 1468.50,637.8 1468.50,635.2 1469.50,635.9 1469.50,640.3 1469.50,647.9 1470.50,635.2 1470.50,642.5 1470.50,654.7 1471.50,658.0 1471.50,649.8 1471.50,650.8 1472.50,656.8 1472.50,653.6 1472.50,646.0 1473.50,640.3 1473.50,645.8 1473.50,641.8 1474.50,637.8 1474.50,629.8 1474.50,636.3 1474.50,638.8 1475.50,642.5 1475.50,646.4 1475.50,634.6 1476.50,629.6 1476.50,633.5 1476.50,637.3 1477.50,630.0 1477.50,633.1 1477.50,635.7 1478.50,643.9 1478.50,627.8 1478.50,635.1 1479.50,625.2 1479.50,636.0 1479.50,632.7 1480.50,636.6 1480.50,625.5 1480.50,628.2 1481.50,635.4 1481.50,626.3 1481.50,640.1 1482.50,627.3 1482.50,632.4 1482.50,628.2 1483.50,630.2 1483.50,625.5 1483.50,640.3 1484.50,634.8 1484.50,625.9 1484.50,648.3 1484.50,632.7 1485.50,638.9 1485.50,645.2 1485.50,625.5 1486.50,629.6 1486.50,621.5 1486.50,641.3 1487.50,631.3 1487.50,627.6 1487.50,649.8 1488.50,634.6 1488.50,633.4 1488.50,636.0 1489.50,627.1 1489.50,633.3 1489.50,641.5 1490.50,643.3 1490.50,639.9 1490.50,629.4 1491.50,639.2 1491.50,632.4 1491.50,637.7 1492.50,633.0 1492.50,633.8 1492.50,630.3 1493.50,627.3 1493.50,640.2 1493.50,643.4 1494.50,636.2 1494.50,635.4 1494.50,633.9 1494.50,627.5 1495.50,637.9 1495.50,634.7 1495.50,634.6 1496.50,627.6 1496.50,635.2 1496.50,625.6 1497.50,621.5 1497.50,633.5 1497.50,625.1 1498.50,631.9 1498.50,636.3 1498.50,624.7 1499.50,628.1 1499.50,636.2 1499.50,630.6 1500.50,637.2 1500.50,642.5 1500.50,627.6 1501.50,634.8 1501.50,624.0 1501.50,633.1 1502.50,631.7 1502.50,632.3 1502.50,628.7 1503.50,633.8 1503.50,629.3 1503.50,638.6 1504.50,639.2 1504.50,637.3 1504.50,634.6 1504.50,633.5 1505.50,634.6 1505.50,629.3 1505.50,623.2 1506.50,653.1 1506.50,628.7 1506.50,631.4 1507.50,639.4 1507.50,634.2 1507.50,646.3 1508.50,635.1 1508.50,624.2 1508.50,637.4 1509.50,632.2 1509.50,626.7 1509.50,624.0 1510.50,627.3 1510.50,630.6 1510.50,624.5 1511.50,632.3 1511.50,617.6 1511.50,625.0 1512.50,632.3 1512.50,637.5 1512.50,636.9 1513.50,637.0 1513.50,633.8 1513.50,629.7 1514.50,639.0 1514.50,629.8 1514.50,630.6 1514.50,636.8 1515.50,624.0 1515.50,626.7 1515.50,627.9 1516.50,631.8 1516.50,631.4 1516.50,626.6 1517.50,634.5 1517.50,624.0 1517.50,632.1 1518.50,626.3 1518.50,623.3 1518.50,628.7 1519.50,630.2 1519.50,632.1 1519.50,628.5 1520.50,636.7 1520.50,631.7 1520.50,625.9 1521.50,643.4 1521.50,635.5 1521.50,628.4 1522.50,634.2 1522.50,632.3 1522.50,632.7 1523.50,621.2 1523.50,638.3 1523.50,628.5 1524.50,631.2 1524.50,632.2 1524.50,638.9 1524.50,634.4 1525.50,638.8 1525.50,639.8 1525.50,621.0 1526.50,628.1 1526.50,638.0 1526.50,635.6 1527.50,626.9 1527.50,620.1 1527.50,627.5 1528.50,621.6 1528.50,624.7 1528.50,620.6 1529.50,631.2 1529.50,634.9 1529.50,631.7 1530.50,633.9 1530.50,636.3 1530.50,628.8 1531.50,630.7 1531.50,630.6 1531.50,637.4 1532.50,625.2 1532.50,623.2 1532.50,630.8 1533.50,629.0 1533.50,635.8 1533.50,630.1 1534.50,632.3 1534.50,645.8 1534.50,634.6 1534.50,636.4 1535.50,634.6 1535.50,626.5 1535.50,627.4 1536.50,625.1 1536.50,630.6 1536.50,620.7 1537.50,631.4 1537.50,623.1 1537.50,635.0 1538.50,625.4 1538.50,632.4 1538.50,634.3 1539.50,623.3 1539.50,625.9 1539.50,624.5 1540.50,626.7 1540.50,624.2 1540.50,625.2 1541.50,625.9 1541.50,624.0 1541.50,613.7 1542.50,631.1 1542.50,635.8 1542.50,635.4 1543.50,635.7 1543.50,630.1 1543.50,626.6 1544.50,623.6 1544.50,629.9 1544.50,623.1 1544.50,616.6 1545.50,622.5 1545.50,620.0 1545.50,633.3 1546.50,624.2 1546.50,624.9 1546.50,635.8 1547.50,627.5 1547.50,623.5 1547.50,630.9 1548.50,621.4 1548.50,620.6 1548.50,624.6 1549.50,627.3 1549.50,628.0 1549.50,625.0 1550.50,621.2 1550.50,634.2 1550.50,624.8 1551.50,623.4 1551.50,627.6 1551.50,627.5 1552.50,621.7 1552.50,628.4 1552.50,618.4 1553.50,621.3 1553.50,626.8 1553.50,622.5 1554.50,627.6 1554.50,628.5 1554.50,619.4 1554.50,629.7 1555.50,641.7 1555.50,624.7 1555.50,632.0 1556.50,630.6 1556.50,617.2 1556.50,624.2 1557.50,618.2 1557.50,629.2 1557.50,626.8 1558.50,626.0 1558.50,618.8 1558.50,627.1 1559.50,634.6 1559.50,621.1 1559.50,627.2 1560.50,622.7 1560.50,617.7 1560.50,610.1 1561.50,619.3 1561.50,609.7 1561.50,623.0 1562.50,616.8 1562.50,616.2 1562.50,629.4 1563.50,622.6 1563.50,621.4 1563.50,615.8 1564.50,620.7 1564.50,621.1 1564.50,622.4 1564.50,616.9 1565.50,618.8 1565.50,618.3 1565.50,618.3 1566.50,614.0 1566.50,620.5 1566.50,617.3 1567.50,617.2 1567.50,616.0 1567.50,613.4 1568.50,616.0 1568.50,624.3 1568.50,613.6 1569.50,612.4 1569.50,611.9 1569.50,613.6 1570.50,625.0 1570.50,617.8 1570.50,613.3 1571.50,613.2 1571.50,616.7 1571.50,615.3 1572.50,622.7 1572.50,616.4 1572.50,630.0 1573.50,621.0 1573.50,615.5 1573.50,625.5 1574.50,612.3 1574.50,608.3 1574.50,612.6 1574.50,615.9 1575.50,614.6 1575.50,617.5 1575.50,609.4 1576.50,618.3 1576.50,613.3 1576.50,619.7 1577.50,612.1 1577.50,619.8 1577.50,613.2 1578.50,615.3 1578.50,606.8 1578.50,612.7 1579.50,612.1 1579.50,607.5 1579.50,618.1 1580.50,620.1 1580.50,614.2 1580.50,619.0 1581.50,606.0 1581.50,611.7 1581.50,610.2 1582.50,612.3 1582.50,626.0 1582.50,607.0 1583.50,614.4 1583.50,625.7 1583.50,621.9 1584.50,618.3 1584.50,613.3 1584.50,617.8 1584.50,617.5 1585.50,617.8 1585.50,623.5 1585.50,620.9 1586.50,618.0 1586.50,623.9 1586.50,615.7 1587.50,611.3 1587.50,624.9 1587.50,613.9 1588.50,614.0 1588.50,612.1 1588.50,604.7 1589.50,618.0 1589.50,603.0 1589.50,607.8 1590.50,600.6 1590.50,612.2 1590.50,610.1 1591.50,613.7 1591.50,612.3 1591.50,619.4 1592.50,618.6 1592.50,615.3 1592.50,609.8 1593.50,617.0 1593.50,611.5 1593.50,612.2 1594.50,608.3 1594.50,606.4 1594.50,617.0 1594.50,614.7 1595.50,611.2 1595.50,613.3 1595.50,602.4 1596.50,601.0 1596.50,604.8 1596.50,606.2 1597.50,613.8 1597.50,613.3 1597.50,607.3 1598.50,602.3 1598.50,607.6 1598.50,603.6 1599.50,596.9 1599.50,595.2 1599.50,604.9 1600.50,600.2 1600.50,599.6 1600.50,611.0 1601.50,607.6 1601.50,605.7 1601.50,608.6 1602.50,603.6 1602.50,606.0 1602.50,610.9 1603.50,608.9 1603.50,613.4 1603.50,611.2 1604.50,605.0 1604.50,608.2 1604.50,609.4 1604.50,607.5 1605.50,619.6 1605.50,615.7 1605.50,612.3 1606.50,603.6 1606.50,607.2 1606.50,607.2 1607.50,604.1 1607.50,607.8 1607.50,613.0 1608.50,603.4 1608.50,608.5 1608.50,605.5 1609.50,613.7 1609.50,612.6 1609.50,605.0 1610.50,606.2 1610.50,602.1 1610.50,607.2 1611.50,602.7 1611.50,598.9 1611.50,596.9 1612.50,599.3 1612.50,597.9 1612.50,599.4 1613.50,600.1 1613.50,600.6 1613.50,599.7 1614.50,607.6 1614.50,603.3 1614.50,608.2 1614.50,604.1 1615.50,604.6 1615.50,601.6 1615.50,603.1 1616.50,601.9 1616.50,606.8 1616.50,595.7 1617.50,606.6 1617.50,609.2 1617.50,600.2 1618.50,599.7 1618.50,602.1 1618.50,602.9 1619.50,605.7 1619.50,594.0 1619.50,607.0 1620.50,591.3 1620.50,604.9 1620.50,601.9 1621.50,598.4 1621.50,598.8 1621.50,595.2 1622.50,600.5 1622.50,599.4 1622.50,605.0 1623.50,595.1 1623.50,601.3 1623.50,602.9 1624.50,600.0 1624.50,595.5 1624.50,597.8 1624.50,600.9 1625.50,597.1 1625.50,595.3 1625.50,594.1 1626.50,595.7 1626.50,591.3 1626.50,597.7 1627.50,593.4 1627.50,597.1 1627.50,594.8 1628.50,598.4 1628.50,595.1 1628.50,599.7 1629.50,594.5 1629.50,602.2 1629.50,595.0 1630.50,601.2 1630.50,606.8 1630.50,600.0 1631.50,592.8 1631.50,594.5 1631.50,592.9 1632.50,596.2 1632.50,593.3 1632.50,597.2 1633.50,587.1 1633.50,586.3 1633.50,589.4 1634.50,592.3 1634.50,592.7 1634.50,588.9 1634.50,590.6 1635.50,595.9 1635.50,590.8 1635.50,590.4 1636.50,591.9 1636.50,592.3 1636.50,592.1 1637.50,593.2 1637.50,594.5 1637.50,595.7 1638.50,589.6 1638.50,599.3 1638.50,593.3 1639.50,590.6 1639.50,585.2 1639.50,594.3 1640.50,588.3 1640.50,588.6 1640.50,589.7 1641.50,587.0 1641.50,599.0 1641.50,590.2 1642.50,594.1 1642.50,592.3 1642.50,594.0 1643.50,596.8 1643.50,598.7 1643.50,590.9 1644.50,593.2 1644.50,597.0 1644.50,592.5 1644.50,595.5 1645.50,594.2 1645.50,590.5 1645.50,588.5 1646.50,598.6 1646.50,592.6 1646.50,591.1 1647.50,598.8 1647.50,596.0 1647.50,594.5 1648.50,592.1 1648.50,599.1 1648.50,599.7 1649.50,594.2 1649.50,592.5 1649.50,589.4 1650.50,587.9 1650.50,593.8 1650.50,584.6 1651.50,592.1 1651.50,585.3 1651.50,584.7 1652.50,584.7 1652.50,585.0 1652.50,584.7 1653.50,587.2 1653.50,588.5 1653.50,579.8 1654.50,582.0 1654.50,583.6 1654.50,586.1 1654.50,595.1 1655.50,583.9 1655.50,590.8 1655.50,589.7 1656.50,586.1 1656.50,589.5 1656.50,581.9 1657.50,592.5 1657.50,580.6 1657.50,582.6 1658.50,586.9 1658.50,581.8 1658.50,580.6 1659.50,581.1 1659.50,579.7 1659.50,582.8 1660.50,578.5 1660.50,578.5 1660.50,578.4 1661.50,581.1 1661.50,589.2 1661.50,582.9 1662.50,589.1 1662.50,587.7 1662.50,585.8 1663.50,584.8 1663.50,586.1 1663.50,583.4 1664.50,581.8 1664.50,581.0 1664.50,579.8 1664.50,577.7 1665.50,575.6 1665.50,579.4 1665.50,580.7 1666.50,573.5 1666.50,575.8 1666.50,582.8 1667.50,572.7 1667.50,572.0 1667.50,579.5 1668.50,577.7 1668.50,576.2 1668.50,579.1 1669.50,578.0 1669.50,577.1 1669.50,574.9 1670.50,585.6 1670.50,578.2 1670.50,575.5 1671.50,586.2 1671.50,578.1 1671.50,579.1 1672.50,580.6 1672.50,576.6 1672.50,574.7 1673.50,575.0 1673.50,572.1 1673.50,579.3 1674.50,583.0 1674.50,577.9 1674.50,575.3 1674.50,572.0 1675.50,573.1 1675.50,575.5 1675.50,570.4 1676.50,573.1 1676.50,574.3 1676.50,576.6 1677.50,575.9 1677.50,576.6 1677.50,579.3 1678.50,588.0 1678.50,584.4 1678.50,581.2 1679.50,579.0 1679.50,582.3 1679.50,585.7 1680.50,587.3 1680.50,594.9 1680.50,596.5 1681.50,601.9 1681.50,609.6 1681.50,619.5 1682.50,627.5 1682.50,619.7 1682.50,631.1 1683.50,625.6 1683.50,621.7 1683.50,628.5 1684.50,617.3 1684.50,618.8 1684.50,620.0 1684.50,610.0 1685.50,606.3 1685.50,608.7 1685.50,601.8 1686.50,606.5 1686.50,599.6 1686.50,597.6 1687.50,601.5 1687.50,596.1 1687.50,589.7 1688.50,596.1 1688.50,596.1 1688.50,597.7 1689.50,595.2 1689.50,596.7 1689.50,598.9 1690.50,592.6 1690.50,591.8 1690.50,595.9 1691.50,591.2 1691.50,587.2 1691.50,587.9 1692.50,587.1 1692.50,584.7 1692.50,588.4 1693.50,583.3 1693.50,580.3 1693.50,588.2 1694.50,592.2 1694.50,587.7 1694.50,587.6 1694.50,583.1 1695.50,579.7 1695.50,581.8 1695.50,578.8 1696.50,583.7 1696.50,585.8 1696.50,593.1"/>
 </g>
 <!-- markers on traces -->
 <g fill="none" stroke="#0000ff" stroke-width="1.3">
  <path d="M792 83.5 L799 83.5 L795.5 92 Z"/>
  <path d="M739.5 533 L746.5 533 L743 527 Z"/>
  <path d="M891.5 476 L898.5 476 L895 470 Z"/>
  <path d="M1150.5 638.5 L1157.5 638.5 L1154 632.5 Z"/>
  <path d="M1693.5 596 L1700.5 596 L1697 590 Z"/>
 </g>
 <g fill="#0000ff">
  <path d="M774 107 L785 107 L779.5 101 Z"/>
  <path d="M805 107 L816 107 L810.5 101 Z"/>
  <path d="M790 97 L801 97 L795.5 91 Z"/>
 </g>
 <!-- axis marker triangles -->
 <g fill="none" stroke="#0000ff" stroke-width="1.3">
  <path d="M692 908 L706 908 L699 902 Z"/>
  <path d="M735.5 908 L749.5 908 L742.5 902 Z"/>
  <path d="M772 908 L786 908 L779 902 Z"/>
  <path d="M804 908 L818 908 L811 902 Z"/>
  <path d="M888 908 L902 908 L895 902 Z"/>
  <path d="M1147 908 L1161 908 L1154 902 Z"/>
  <path d="M1690.5 908 L1703.5 908 L1697 902 Z"/>
 </g>
 <path d="M788 908.5 L802 908.5 L795 902 Z" fill="#0000ff"/>
 <!-- reference triangles -->
 <path d="M96 486 L102.5 492 L96 498 Z" fill="#0000ff"/>
 <path d="M1704.5 486 L1697 492.3 L1704.5 498.5 Z" fill="#0000ff"/>
 <path d="M96 895 L103 901.5 L96 908 Z" fill="#ff0000"/>
 <path d="M1704 895 L1697 901.5 L1704 908.4 Z" fill="#ff0000"/>
 <path d="M361.5 9.5 L367 14.25 L361.5 19 Z" fill="#0000ff"/>
 <path d="M283.8 32 L289.3 36.5 L283.8 41 Z" fill="#ff0000"/>
 <path d="M283.8 54 L289.3 58.5 L283.8 63 Z" fill="#00c800"/>
 <!-- frame -->
 <rect x="0" y="0" width="1710" height="2" fill="#f4f1e8"/>
 <rect x="0" y="0" width="2" height="954" fill="#f4f1e8"/>
 <rect x="2" y="2" width="1706" height="2" fill="#7c776a"/>
 <rect x="2" y="2" width="2" height="925" fill="#7c776a"/>
 <rect x="1708" y="0" width="2" height="954" fill="#4a473f"/>
 <rect x="2" y="927" width="1706" height="25" fill="#d4d0c8"/>
 <rect x="0" y="952" width="1710" height="2" fill="#4a473f"/>
</svg>

<div class="m b" style="left:4px;top:4px;"><span class="hl" style="padding-right:1px;margin-right:-1px;">Гр1</span> S21 Ампл лог 1O.OO дБ/  -5O.OO дБ</div>
<div class="m r" style="left:4px;top:26px;">Гр2 S11 КСВН 1.OOO /  1.OOO</div>
<div class="m g" style="left:4px;top:48px;">Гр3 S22 КСВН 1.OOO /  1.OOO</div>

<div class="m k" style="left:30px;top:72px;">O.OOO</div>
<div class="m k" style="left:17px;top:154px;">-1O.OO</div>
<div class="m k" style="left:17px;top:236px;">-2O.OO</div>
<div class="m k" style="left:17px;top:317px;">-3O.OO</div>
<div class="m k" style="left:17px;top:399px;">-4O.OO</div>
<div class="m b" style="left:17px;top:481px;">-5O.OO</div>
<div class="m k" style="left:17px;top:563px;">-6O.OO</div>
<div class="m k" style="left:17px;top:645px;">-7O.OO</div>
<div class="m k" style="left:17px;top:726px;">-8O.OO</div>
<div class="m k" style="left:17px;top:808px;">-9O.OO</div>
<div class="m k" style="left:17px;top:890px;">-1OO.O</div>

<div class="m b" style="left:106px;top:87px;">1 4.86OOOOO ГГц -2.217O дБ</div>
<div class="m b" style="left:106px;top:110px;"><span class="hl" style="padding-right:2px;margin-right:-2px;">2</span> 4.95OOOOO ГГц -1.2416 дБ</div>
<div class="m b" style="left:106px;top:133px;">3 5.O4OOOOO ГГц -2.26O5 дБ</div>
<div class="m b" style="left:106px;top:156px;">4 4.4OOOOOO ГГц -9O.7O1 дБ</div>
<div class="m b" style="left:106px;top:179px;">5 4.65OOOOO ГГц -53.659 дБ</div>
<div class="m b" style="left:106px;top:202px;">6 5.52OOOOO ГГц -46.719 дБ</div>
<div class="m b" style="left:106px;top:225px;">7 7.OOOOOOO ГГц -66.6O6 дБ</div>
<div class="m b" style="left:106px;top:248px;">8 1O.1OOOOO ГГц -61.585 дБ</div>
<div class="m b" style="left:106px;top:275px;">   1-3 :  18O.OOOOO МГц</div>
<div class="m b" style="left:106px;top:297px;">  сред : -1.4398 дБ</div>
<div class="m b" style="left:106px;top:319px;">ст.отк :  O.24O6 дБ</div>
<div class="m b" style="left:106px;top:341px;">   п-п :  1.O368 дБ</div>
<div class="m b" style="left:106px;top:367px;"> Плс :  18O.21428 МГц</div>
<div class="m b" style="left:106px;top:389px;">цент :  4.9496626 ГГц</div>
<div class="m b" style="left:106px;top:411px;"> ниж :  4.8595555 ГГц</div>
<div class="m b" style="left:106px;top:433px;">верх :  5.O397698 ГГц</div>
<div class="m b" style="left:106px;top:455px;">   Q :  27.465</div>
<div class="m b" style="left:106px;top:477px;"> пот : -1.2416 дБ</div>
<div class="m r" style="left:106px;top:502px;">1 4.88OOOOO ГГц  1.1185</div>
<div class="m r" style="left:106px;top:525.5px;">2 4.95OOOOO ГГц  1.11O9</div>
<div class="m r" style="left:106px;top:548px;">3 5.O2OOOOO ГГц  1.O748</div>
<div class="m g" style="left:106px;top:575.5px;">1 4.88OOOOO ГГц  1.O53O</div>
<div class="m g" style="left:106px;top:598px;">2 4.95OOOOO ГГц  1.14O1</div>
<div class="m g" style="left:106px;top:621px;">3 5.O2OOOOO ГГц  1.O833</div>

<!-- marker labels on plot -->
<div class="m b" style="left:789px;top:60px;">2</div>
<div class="m b" style="left:774px;top:112px;">1</div>
<div class="m b" style="left:804px;top:112px;">3</div>
<div class="m b" style="left:736px;top:533px;">5</div>
<div class="m b" style="left:889px;top:477px;">6</div>
<div class="m b" style="left:1148px;top:640px;">7</div>
<div class="m b" style="left:1691px;top:596px;">8</div>
<div class="m b" style="left:1696px;top:576px;">1</div>
<div class="m r" style="left:1695px;top:73px;">2</div>
<div class="m r" style="left:777px;top:907px;">1</div>
<div class="m r" style="left:788px;top:907px;">2</div>
<div class="m r" style="left:800px;top:907px;">3</div>
<div class="m g" style="left:778px;top:908px;">1</div>
<div class="m g" style="left:789px;top:908px;">2</div>
<div class="m g" style="left:801px;top:908px;">3</div>

<div class="s k" style="left:267px;top:900px;letter-spacing:1.5px;">2Г</div>
<div class="s k" style="left:442px;top:900px;letter-spacing:1.5px;">3Г</div>
<div class="s k" style="left:617px;top:900px;letter-spacing:1.5px;">4Г</div>
<div class="s k" style="left:967px;top:900px;letter-spacing:1.5px;">6Г</div>
<div class="s k" style="left:1142px;top:900px;letter-spacing:1.5px;">7Г</div>
<div class="s k" style="left:1317px;top:900px;letter-spacing:1.5px;">8Г</div>
<div class="s k" style="left:1492px;top:900px;letter-spacing:1.5px;">9Г</div>

<div class="s" style="left:24px;top:930px;">Старт 1 ГГц</div>
<div class="s" style="left:488px;top:930px;">4991</div>
<div class="s" style="left:710px;top:930px;">Лин</div>
<div class="s" style="left:923px;top:930px;">10 kГц</div>
<div class="s" style="left:1163px;top:930px;">0 дБм</div>
<div class="s" style="left:1570px;top:930px;">Стоп 10.1 ГГц</div>
</body></html>
